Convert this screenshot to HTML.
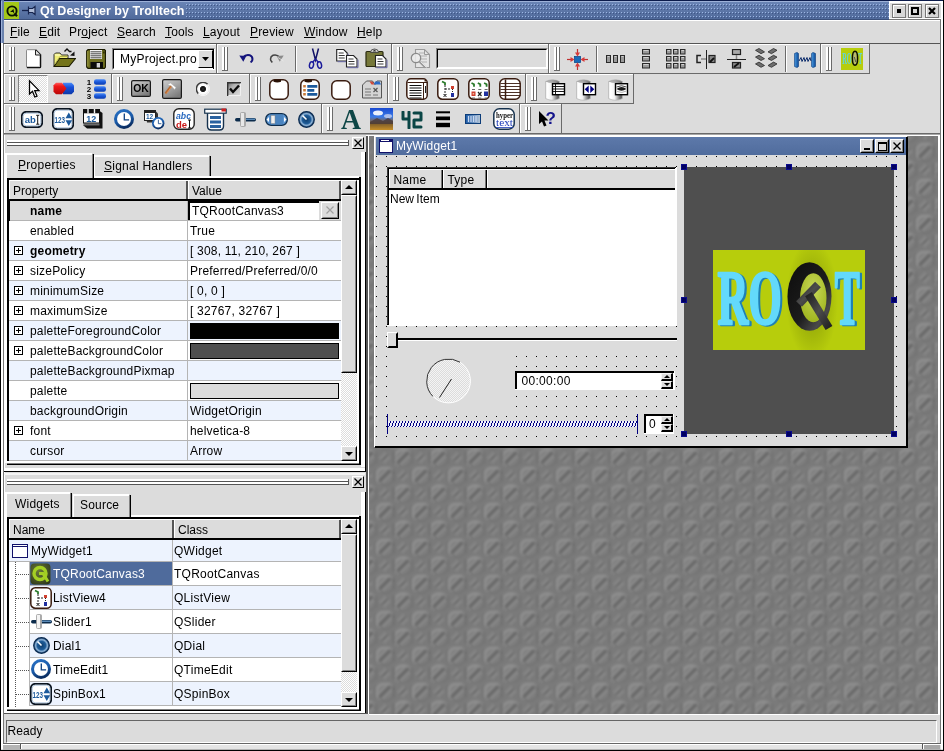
<!DOCTYPE html>
<html><head><meta charset="utf-8"><title>Qt Designer by Trolltech</title>
<style>
html,body{margin:0;padding:0}
body{width:944px;height:751px;position:relative;overflow:hidden;background:#dcdcdc;font:12px/14px "Liberation Sans",sans-serif;color:#000}
body div,body svg{position:absolute;box-sizing:border-box}
.t{white-space:nowrap;height:14px;line-height:14px}
.b{font-weight:bold}
u{text-decoration:underline;text-underline-offset:1px}
.ra{border:1px solid;border-color:#fff #848484 #848484 #fff}
.su{border:1px solid;border-color:#848484 #fff #fff #848484}
</style></head>
<body>
<div id="w" style="left:0;top:0;width:944px;height:751px;will-change:transform">
<div style="left:0px;top:0px;width:944px;height:20px;background:linear-gradient(#6c87b8,#4e6899)"></div>
<svg style="left:186px;top:4px" width="703" height="14" viewBox="0 0 703 14"><defs><pattern id="tdots" width="3" height="4" patternUnits="userSpaceOnUse"><rect x="0" y="0" width="1" height="1" fill="#9db6e4"/><rect x="1" y="1" width="1" height="1" fill="#3f5688"/></pattern></defs><rect width="703" height="14" fill="url(#tdots)"/></svg>
<div style="left:0px;top:0px;width:944px;height:1px;background:#0a1a4a"></div>
<div style="left:1px;top:1px;width:888px;height:1px;background:#9db1d8"></div>
<div style="left:0px;top:0px;width:4px;height:43px;background:#6a82ae"></div>
<div style="left:0px;top:0px;width:1px;height:43px;background:#0a1a4a"></div>
<div style="left:1px;top:1px;width:1px;height:42px;background:#9db1d8"></div>
<div style="left:4px;top:19px;width:885px;height:1px;background:#3a4f7a"></div>
<div style="left:889px;top:1px;width:55px;height:19px;background:#dcdcdc"></div>
<div style="left:889px;top:1px;width:53px;height:2px;background:#fff"></div>
<div style="left:889px;top:1px;width:1px;height:18px;background:#fff"></div>
<div style="left:892px;top:4px;width:14px;height:14px;background:#d6d6d6;border:1px solid #777;box-shadow:inset 1px 1px 0 #fff"></div>
<div style="left:897px;top:9px;width:4px;height:4px;background:#000"></div>
<div style="left:908px;top:4px;width:14px;height:14px;background:#d6d6d6;border:1px solid #777;box-shadow:inset 1px 1px 0 #fff"></div>
<div style="left:911px;top:7px;width:8px;height:8px;border:2px solid #000"></div>
<div style="left:925px;top:4px;width:14px;height:14px;background:#d6d6d6;border:1px solid #777;box-shadow:inset 1px 1px 0 #fff"></div>
<svg style="left:928px;top:7px" width="8" height="8" viewBox="0 0 8 8"><path d="M1 1L7 7M7 1L1 7" stroke="#000" stroke-width="2.200" fill="none"/></svg>
<div style="left:889px;top:18px;width:52px;height:1px;background:#fff"></div>
<div style="left:4px;top:2px;width:15px;height:17px;background:#a4c81a"></div>
<svg style="left:4px;top:2px" width="15" height="17" viewBox="0 0 15 17"><circle cx="8" cy="9" r="4.600" fill="none" stroke="#0c1404" stroke-width="1.900"/><path d="M10.500 11.500L13 14.200" stroke="#0c1404" stroke-width="2.200"/><path d="M6 10l3.500-3 1 5.500-1.500-2.500z" fill="#0c1404"/></svg>
<svg style="left:22px;top:5px" width="15" height="11" viewBox="0 0 15 11"><path d="M0 5.5h6" stroke="#16244d" stroke-width="1.3"/><path d="M6.5 1.5v8M6.5 3.5h4l2.5-2v8l-2.5-2h-4" stroke="#16244d" stroke-width="1.2" fill="#aebbd6"/></svg>
<div class="t b" style="left:40px;top:4px;color:#fff;font-size:12.5px">Qt Designer by Trolltech</div>
<div style="left:4px;top:20px;width:936px;height:23px;background:#dcdcdc"></div>
<div style="left:4px;top:20px;width:936px;height:1px;background:#fff"></div>
<div class="t" style="left:10px;top:25px;letter-spacing:0.15px"><u>F</u>ile</div>
<div class="t" style="left:39px;top:25px;letter-spacing:0.15px"><u>E</u>dit</div>
<div class="t" style="left:69px;top:25px;letter-spacing:0.15px">Pr<u>o</u>ject</div>
<div class="t" style="left:117px;top:25px;letter-spacing:0.15px"><u>S</u>earch</div>
<div class="t" style="left:165px;top:25px;letter-spacing:0.15px"><u>T</u>ools</div>
<div class="t" style="left:203px;top:25px;letter-spacing:0.15px"><u>L</u>ayout</div>
<div class="t" style="left:250px;top:25px;letter-spacing:0.15px"><u>P</u>review</div>
<div class="t" style="left:304px;top:25px;letter-spacing:0.15px"><u>W</u>indow</div>
<div class="t" style="left:357px;top:25px;letter-spacing:0.15px"><u>H</u>elp</div>
<div style="left:0px;top:43px;width:1px;height:708px;background:#000"></div>
<div style="left:1px;top:43px;width:2px;height:706px;background:#fff"></div>
<div style="left:3px;top:43px;width:1px;height:701px;background:#777"></div>
<div style="left:4px;top:135px;width:1px;height:578px;background:#fff"></div>
<div style="left:889px;top:19px;width:52px;height:1px;background:#777"></div>
<div style="left:940px;top:19px;width:1px;height:725px;background:#777"></div>
<div style="left:941px;top:1px;width:2px;height:748px;background:#fff"></div>
<div style="left:943px;top:0px;width:1px;height:751px;background:#000"></div>
<div style="left:4px;top:713px;width:364px;height:1px;background:#555"></div>
<div style="left:6px;top:720px;width:931px;height:23px;border:1px solid;border-color:#666 #fff #fff #666"></div>
<div class="t" style="left:7.5px;top:724px;letter-spacing:0.1px">Ready</div>
<div style="left:3px;top:743px;width:938px;height:1px;background:#666"></div>
<div style="left:1px;top:744px;width:942px;height:1px;background:#fff"></div>
<div style="left:3px;top:745px;width:937px;height:4px;background:#e4e4e4"></div>
<div style="left:3px;top:745px;width:17px;height:5px;background:#b4b4b4"></div>
<div style="left:20px;top:744px;width:1px;height:5px;background:#555"></div>
<div style="left:21px;top:744px;width:1px;height:5px;background:#fff"></div>
<div style="left:922px;top:744px;width:1px;height:5px;background:#555"></div>
<div style="left:923px;top:744px;width:1px;height:5px;background:#fff"></div>
<div style="left:924px;top:745px;width:16px;height:4px;background:#a8a8a8"></div>
<div style="left:3px;top:749px;width:938px;height:1px;background:#b4b4b4"></div>
<div style="left:0px;top:750px;width:944px;height:1px;background:#000"></div>
<div style="left:3px;top:43px;width:937px;height:1px;background:#555"></div>
<div style="left:4px;top:44px;width:212px;height:1px;background:#fff"></div>
<div style="left:4px;top:44px;width:1px;height:29px;background:#fff"></div>
<div style="left:4px;top:73px;width:213px;height:1px;background:#6a6a6a"></div>
<div style="left:216px;top:44px;width:1px;height:30px;background:#6a6a6a"></div>
<div style="left:9px;top:47px;width:2px;height:24px;background:#fff"></div>
<div style="left:11px;top:47px;width:1px;height:24px;background:#6a6a6a"></div>
<div style="left:9px;top:70px;width:3px;height:1px;background:#6a6a6a"></div>
<div style="left:12px;top:47px;width:2px;height:24px;background:#fff"></div>
<div style="left:14px;top:47px;width:1px;height:24px;background:#6a6a6a"></div>
<div style="left:12px;top:70px;width:3px;height:1px;background:#6a6a6a"></div>
<div style="left:217px;top:44px;width:174px;height:1px;background:#fff"></div>
<div style="left:217px;top:44px;width:1px;height:29px;background:#fff"></div>
<div style="left:217px;top:73px;width:175px;height:1px;background:#6a6a6a"></div>
<div style="left:391px;top:44px;width:1px;height:30px;background:#6a6a6a"></div>
<div style="left:222px;top:47px;width:2px;height:24px;background:#fff"></div>
<div style="left:224px;top:47px;width:1px;height:24px;background:#6a6a6a"></div>
<div style="left:222px;top:70px;width:3px;height:1px;background:#6a6a6a"></div>
<div style="left:225px;top:47px;width:2px;height:24px;background:#fff"></div>
<div style="left:227px;top:47px;width:1px;height:24px;background:#6a6a6a"></div>
<div style="left:225px;top:70px;width:3px;height:1px;background:#6a6a6a"></div>
<div style="left:392px;top:44px;width:156px;height:1px;background:#fff"></div>
<div style="left:392px;top:44px;width:1px;height:29px;background:#fff"></div>
<div style="left:392px;top:73px;width:157px;height:1px;background:#6a6a6a"></div>
<div style="left:548px;top:44px;width:1px;height:30px;background:#6a6a6a"></div>
<div style="left:397px;top:47px;width:2px;height:24px;background:#fff"></div>
<div style="left:399px;top:47px;width:1px;height:24px;background:#6a6a6a"></div>
<div style="left:397px;top:70px;width:3px;height:1px;background:#6a6a6a"></div>
<div style="left:400px;top:47px;width:2px;height:24px;background:#fff"></div>
<div style="left:402px;top:47px;width:1px;height:24px;background:#6a6a6a"></div>
<div style="left:400px;top:70px;width:3px;height:1px;background:#6a6a6a"></div>
<div style="left:549px;top:44px;width:271px;height:1px;background:#fff"></div>
<div style="left:549px;top:44px;width:1px;height:29px;background:#fff"></div>
<div style="left:549px;top:73px;width:272px;height:1px;background:#6a6a6a"></div>
<div style="left:820px;top:44px;width:1px;height:30px;background:#6a6a6a"></div>
<div style="left:554px;top:47px;width:2px;height:24px;background:#fff"></div>
<div style="left:556px;top:47px;width:1px;height:24px;background:#6a6a6a"></div>
<div style="left:554px;top:70px;width:3px;height:1px;background:#6a6a6a"></div>
<div style="left:557px;top:47px;width:2px;height:24px;background:#fff"></div>
<div style="left:559px;top:47px;width:1px;height:24px;background:#6a6a6a"></div>
<div style="left:557px;top:70px;width:3px;height:1px;background:#6a6a6a"></div>
<div style="left:821px;top:44px;width:48px;height:1px;background:#fff"></div>
<div style="left:821px;top:44px;width:1px;height:29px;background:#fff"></div>
<div style="left:821px;top:73px;width:49px;height:1px;background:#6a6a6a"></div>
<div style="left:869px;top:44px;width:1px;height:30px;background:#6a6a6a"></div>
<div style="left:826px;top:47px;width:2px;height:24px;background:#fff"></div>
<div style="left:828px;top:47px;width:1px;height:24px;background:#6a6a6a"></div>
<div style="left:826px;top:70px;width:3px;height:1px;background:#6a6a6a"></div>
<div style="left:829px;top:47px;width:2px;height:24px;background:#fff"></div>
<div style="left:831px;top:47px;width:1px;height:24px;background:#6a6a6a"></div>
<div style="left:829px;top:70px;width:3px;height:1px;background:#6a6a6a"></div>
<div style="left:4px;top:74px;width:107px;height:1px;background:#fff"></div>
<div style="left:4px;top:74px;width:1px;height:29px;background:#fff"></div>
<div style="left:4px;top:103px;width:108px;height:1px;background:#6a6a6a"></div>
<div style="left:111px;top:74px;width:1px;height:30px;background:#6a6a6a"></div>
<div style="left:9px;top:77px;width:2px;height:24px;background:#fff"></div>
<div style="left:11px;top:77px;width:1px;height:24px;background:#6a6a6a"></div>
<div style="left:9px;top:100px;width:3px;height:1px;background:#6a6a6a"></div>
<div style="left:12px;top:77px;width:2px;height:24px;background:#fff"></div>
<div style="left:14px;top:77px;width:1px;height:24px;background:#6a6a6a"></div>
<div style="left:12px;top:100px;width:3px;height:1px;background:#6a6a6a"></div>
<div style="left:112px;top:74px;width:137px;height:1px;background:#fff"></div>
<div style="left:112px;top:74px;width:1px;height:29px;background:#fff"></div>
<div style="left:112px;top:103px;width:138px;height:1px;background:#6a6a6a"></div>
<div style="left:249px;top:74px;width:1px;height:30px;background:#6a6a6a"></div>
<div style="left:117px;top:77px;width:2px;height:24px;background:#fff"></div>
<div style="left:119px;top:77px;width:1px;height:24px;background:#6a6a6a"></div>
<div style="left:117px;top:100px;width:3px;height:1px;background:#6a6a6a"></div>
<div style="left:120px;top:77px;width:2px;height:24px;background:#fff"></div>
<div style="left:122px;top:77px;width:1px;height:24px;background:#6a6a6a"></div>
<div style="left:120px;top:100px;width:3px;height:1px;background:#6a6a6a"></div>
<div style="left:250px;top:74px;width:137px;height:1px;background:#fff"></div>
<div style="left:250px;top:74px;width:1px;height:29px;background:#fff"></div>
<div style="left:250px;top:103px;width:138px;height:1px;background:#6a6a6a"></div>
<div style="left:387px;top:74px;width:1px;height:30px;background:#6a6a6a"></div>
<div style="left:255px;top:77px;width:2px;height:24px;background:#fff"></div>
<div style="left:257px;top:77px;width:1px;height:24px;background:#6a6a6a"></div>
<div style="left:255px;top:100px;width:3px;height:1px;background:#6a6a6a"></div>
<div style="left:258px;top:77px;width:2px;height:24px;background:#fff"></div>
<div style="left:260px;top:77px;width:1px;height:24px;background:#6a6a6a"></div>
<div style="left:258px;top:100px;width:3px;height:1px;background:#6a6a6a"></div>
<div style="left:388px;top:74px;width:137px;height:1px;background:#fff"></div>
<div style="left:388px;top:74px;width:1px;height:29px;background:#fff"></div>
<div style="left:388px;top:103px;width:138px;height:1px;background:#6a6a6a"></div>
<div style="left:525px;top:74px;width:1px;height:30px;background:#6a6a6a"></div>
<div style="left:393px;top:77px;width:2px;height:24px;background:#fff"></div>
<div style="left:395px;top:77px;width:1px;height:24px;background:#6a6a6a"></div>
<div style="left:393px;top:100px;width:3px;height:1px;background:#6a6a6a"></div>
<div style="left:396px;top:77px;width:2px;height:24px;background:#fff"></div>
<div style="left:398px;top:77px;width:1px;height:24px;background:#6a6a6a"></div>
<div style="left:396px;top:100px;width:3px;height:1px;background:#6a6a6a"></div>
<div style="left:526px;top:74px;width:107px;height:1px;background:#fff"></div>
<div style="left:526px;top:74px;width:1px;height:29px;background:#fff"></div>
<div style="left:526px;top:103px;width:108px;height:1px;background:#6a6a6a"></div>
<div style="left:633px;top:74px;width:1px;height:30px;background:#6a6a6a"></div>
<div style="left:531px;top:77px;width:2px;height:24px;background:#fff"></div>
<div style="left:533px;top:77px;width:1px;height:24px;background:#6a6a6a"></div>
<div style="left:531px;top:100px;width:3px;height:1px;background:#6a6a6a"></div>
<div style="left:534px;top:77px;width:2px;height:24px;background:#fff"></div>
<div style="left:536px;top:77px;width:1px;height:24px;background:#6a6a6a"></div>
<div style="left:534px;top:100px;width:3px;height:1px;background:#6a6a6a"></div>
<div style="left:4px;top:104px;width:317px;height:1px;background:#fff"></div>
<div style="left:4px;top:104px;width:1px;height:29px;background:#fff"></div>
<div style="left:4px;top:133px;width:318px;height:1px;background:#6a6a6a"></div>
<div style="left:321px;top:104px;width:1px;height:30px;background:#6a6a6a"></div>
<div style="left:9px;top:107px;width:2px;height:24px;background:#fff"></div>
<div style="left:11px;top:107px;width:1px;height:24px;background:#6a6a6a"></div>
<div style="left:9px;top:130px;width:3px;height:1px;background:#6a6a6a"></div>
<div style="left:12px;top:107px;width:2px;height:24px;background:#fff"></div>
<div style="left:14px;top:107px;width:1px;height:24px;background:#6a6a6a"></div>
<div style="left:12px;top:130px;width:3px;height:1px;background:#6a6a6a"></div>
<div style="left:322px;top:104px;width:197px;height:1px;background:#fff"></div>
<div style="left:322px;top:104px;width:1px;height:29px;background:#fff"></div>
<div style="left:322px;top:133px;width:198px;height:1px;background:#6a6a6a"></div>
<div style="left:519px;top:104px;width:1px;height:30px;background:#6a6a6a"></div>
<div style="left:327px;top:107px;width:2px;height:24px;background:#fff"></div>
<div style="left:329px;top:107px;width:1px;height:24px;background:#6a6a6a"></div>
<div style="left:327px;top:130px;width:3px;height:1px;background:#6a6a6a"></div>
<div style="left:330px;top:107px;width:2px;height:24px;background:#fff"></div>
<div style="left:332px;top:107px;width:1px;height:24px;background:#6a6a6a"></div>
<div style="left:330px;top:130px;width:3px;height:1px;background:#6a6a6a"></div>
<div style="left:520px;top:104px;width:41px;height:1px;background:#fff"></div>
<div style="left:520px;top:104px;width:1px;height:29px;background:#fff"></div>
<div style="left:520px;top:133px;width:42px;height:1px;background:#6a6a6a"></div>
<div style="left:561px;top:104px;width:1px;height:30px;background:#6a6a6a"></div>
<div style="left:525px;top:107px;width:2px;height:24px;background:#fff"></div>
<div style="left:527px;top:107px;width:1px;height:24px;background:#6a6a6a"></div>
<div style="left:525px;top:130px;width:3px;height:1px;background:#6a6a6a"></div>
<div style="left:528px;top:107px;width:2px;height:24px;background:#fff"></div>
<div style="left:530px;top:107px;width:1px;height:24px;background:#6a6a6a"></div>
<div style="left:528px;top:130px;width:3px;height:1px;background:#6a6a6a"></div>
<div style="left:4px;top:133px;width:936px;height:1px;background:#6a6a6a"></div>
<div style="left:4px;top:134px;width:936px;height:1px;background:#a8a8a8"></div>
<div style="left:295px;top:46px;width:1px;height:26px;background:#6a6a6a"></div>
<div style="left:296px;top:46px;width:1px;height:26px;background:#fff"></div>
<div style="left:596px;top:46px;width:1px;height:26px;background:#6a6a6a"></div>
<div style="left:597px;top:46px;width:1px;height:26px;background:#fff"></div>
<div style="left:785px;top:46px;width:1px;height:26px;background:#6a6a6a"></div>
<div style="left:786px;top:46px;width:1px;height:26px;background:#fff"></div>
<div style="left:112px;top:48px;width:103px;height:22px;background:#fff;border:2px solid;border-color:#000 #fff #fff #000"></div>
<div style="left:112px;top:48px;width:103px;height:22px;border:1px solid;border-color:#848484 #fff #fff #848484"></div>
<div class="t" style="left:120px;top:52px;letter-spacing:0.22px">MyProject.pro</div>
<div style="left:213px;top:49px;width:1px;height:20px;background:#000"></div>
<div style="left:198px;top:50px;width:15px;height:18px;background:#dcdcdc;border:1px solid;border-color:#fff #000 #000 #fff"></div>
<svg style="left:202px;top:57px" width="7" height="4" viewBox="0 0 7 4"><path d="M0 0h7L3.500 4z" fill="#000"/></svg>
<div style="left:436px;top:48px;width:112px;height:21px;background:#dcdcdc;border:2px solid;border-color:#000 #fff #fff #000"></div>
<div style="left:436px;top:48px;width:112px;height:21px;border:1px solid;border-color:#848484 #fff #fff #848484"></div>
<div style="left:18px;top:75px;width:30px;height:28px;background-image:repeating-conic-gradient(#fff 0 25%,#dcdcdc 0 50%);background-size:2px 2px;border:1px solid;border-color:#848484 #fff #fff #848484"></div>
<svg style="left:25px;top:49px" width="17" height="20" viewBox="0 0 17 20"><path d="M2 1h8.500l5 5v12.500h-13.500z" fill="#fff"/><path d="M1.500 18.500v-17q0-0.800 0.800-0.800h8.200" fill="none" stroke="#8a8a8a" stroke-width="1"/><path d="M10.500 0.800l5 5v12q0 0.800-0.800 0.800h-12.700" fill="none" stroke="#111" stroke-width="1.500"/><path d="M10.500 1v5h5" fill="#e4e4e4" stroke="#222" stroke-width="1"/><path d="M3 17.500h11.500v-10" stroke="#c8c8c8" stroke-width="1" fill="none"/></svg>
<svg style="left:53px;top:48px" width="23" height="20" viewBox="0 0 23 20"><path d="M11.500 3.500l2.500-2.500 2.500 2.500 2 0" stroke="#111" stroke-width="1.300" fill="none"/><path d="M21.500 3.500l0 4.500-4.500-0.500z" fill="#111"/><path d="M1 18V6.500l1.500-1.500h4.500l1.500 2h6.500v3.500" fill="#f0ee78" stroke="#333" stroke-width="1"/><path d="M1 18.500l5.500-8h16l-6.500 8z" fill="#74741a" stroke="#1a1a00" stroke-width="1.100"/><path d="M2 7h5.500" stroke="#ffffd0" stroke-width="1"/><path d="M2 16l5-7.500h7.500" stroke="#b0b048" stroke-width="1" fill="none"/></svg>
<svg style="left:86px;top:49px" width="20" height="20" viewBox="0 0 20 20"><path d="M0.700 2l1.300-1.300h16.500l1 1v16.300l-1 1.300h-16.500l-1.300-1.300z" fill="#6e6e20" stroke="#1a1a00" stroke-width="1.200"/><path d="M1.800 17.500v-15.500" stroke="#a0a048" stroke-width="1"/><rect x="4" y="1" width="12" height="9" fill="#f4f4f4"/><path d="M4.500 2.800h11M4.500 4.800h11M4.500 6.800h11M4.500 8.800h11" stroke="#333" stroke-width="0.900"/><rect x="4.500" y="13" width="12.500" height="6" fill="#0a0a0a"/><rect x="10.700" y="14" width="3.300" height="4.500" fill="#d0d0d0"/><rect x="17.300" y="2.500" width="1.200" height="2" fill="#1a1a00"/></svg>
<svg style="left:239px;top:53px" width="15" height="11" viewBox="0 0 15 11"><path d="M4 4.500q3-3.500 7-2.200q3.200 1.500 2.200 5.200l-1.500 2" fill="none" stroke="#14147c" stroke-width="2"/><path d="M0.300 2.500l7 0.500-3 5.800z" fill="#14147c"/></svg>
<svg style="left:269px;top:53px" width="15" height="11" viewBox="0 0 15 11"><path d="M11 4.500q-3-3.500-7-2.200q-3.200 1.500-2.200 5.200l1.500 2" fill="none" stroke="#444" stroke-width="1.500"/><path d="M14.700 2.500l-7 0.500 3 5.800z" fill="#8a8a8a"/><path d="M9 4.500l5.500 3.500" stroke="#eee" stroke-width="0.700"/></svg>
<svg style="left:308px;top:48px" width="15" height="22" viewBox="0 0 15 22"><path d="M4.500 0.500l3 11.500 3-11.500" fill="none" stroke="#111166" stroke-width="1.500"/><path d="M7.500 11l-3 3.500M7.500 11l3 3.500" stroke="#2020a0" stroke-width="1.500"/><ellipse cx="3.500" cy="17" rx="2" ry="3.300" fill="none" stroke="#1a1a9a" stroke-width="1.500" transform="rotate(12 3.500 17)"/><ellipse cx="11.500" cy="17" rx="2" ry="3.300" fill="none" stroke="#1a1a9a" stroke-width="1.500" transform="rotate(-12 11.500 17)"/></svg>
<svg style="left:336px;top:49px" width="23" height="22" viewBox="0 0 23 22"><path d="M0.7 0.5h7l3.500 3.500v8h-10.500z" fill="#fff" stroke="#222" stroke-width="1.100"/><path d="M2.7 4h5M2.7 6.5h6M2.7 9h6" stroke="#222" stroke-width="0.900"/><path d="M1.7 12.7h10.500v-8" stroke="#6a6aa8" stroke-width="1" fill="none"/><path d="M10.5 6.5h7l3.500 3.500v8h-10.500z" fill="#fff" stroke="#222" stroke-width="1.100"/><path d="M12.5 10h5M12.5 12.5h6M12.5 15h6" stroke="#222" stroke-width="0.900"/><path d="M11.5 18.7h10.500v-8" stroke="#6a6aa8" stroke-width="1" fill="none"/></svg>
<svg style="left:365px;top:48px" width="24" height="22" viewBox="0 0 24 22"><rect x="1" y="3.500" width="17" height="15" rx="1" fill="#76783a" stroke="#2a2a10" stroke-width="1.200"/><path d="M5.500 4.500q0-3.500 4-3.500t4 3.500z" fill="#d8d8d8" stroke="#333" stroke-width="0.800"/><path d="M7.500 3.500l2-2 2 2z" fill="#333"/><path d="M10.5 7.5h7l3.500 3.500v8h-10.500z" fill="#fff" stroke="#222" stroke-width="1.100"/><path d="M12.5 11h5M12.5 13.5h6M12.5 16h6" stroke="#222" stroke-width="0.900"/><path d="M11.5 19.7h10.500v-8" stroke="#6a6aa8" stroke-width="1" fill="none"/></svg>
<svg style="left:410px;top:48px" width="22" height="22" viewBox="0 0 22 22"><path d="M5.500 1.500h9l5 5v13h-14z" fill="#e6e6e6" stroke="#9a9a9a" stroke-width="1.100"/><path d="M14.500 1.500v5h5" fill="none" stroke="#9a9a9a" stroke-width="1"/><path d="M9 5h5M9 8h8M9 11h8M9 14h8" stroke="#b0b0b0" stroke-width="1"/><circle cx="6" cy="10" r="4.700" fill="#ececec" fill-opacity="0.85" stroke="#8a8a8a" stroke-width="1.300"/><path d="M9.500 13.500l6 6" stroke="#9a9a9a" stroke-width="2.200"/><path d="M10.500 13.500l6 6" stroke="#fff" stroke-width="0.700"/></svg>
<svg style="left:567px;top:49px" width="21" height="21" viewBox="0 0 21 21"><rect x="7.500" y="7.500" width="6" height="6" fill="#1a6ab8" stroke="#0c4c90" stroke-width="0.800"/><g transform="rotate(0 10.500 10.500)"><path d="M10.500 0v6" stroke="#c03030" stroke-width="1.200"/><path d="M8 3.500h5l-2.500 4z" fill="#d83a3a"/></g><g transform="rotate(90 10.500 10.500)"><path d="M10.500 0v6" stroke="#c03030" stroke-width="1.200"/><path d="M8 3.500h5l-2.500 4z" fill="#d83a3a"/></g><g transform="rotate(180 10.500 10.500)"><path d="M10.500 0v6" stroke="#c03030" stroke-width="1.200"/><path d="M8 3.500h5l-2.500 4z" fill="#d83a3a"/></g><g transform="rotate(270 10.500 10.500)"><path d="M10.500 0v6" stroke="#c03030" stroke-width="1.200"/><path d="M8 3.500h5l-2.500 4z" fill="#d83a3a"/></g></svg>
<svg style="left:606px;top:55px" width="20" height="9" viewBox="0 0 20 9"><rect x="0.5" y="0.5" width="4" height="7" fill="#9a9a9a" stroke="#2a2a2a" stroke-width="1"/><path d="M1.5 1.5h2" stroke="#d0d0d0" stroke-width="1"/><rect x="7.5" y="0.5" width="4" height="7" fill="#9a9a9a" stroke="#2a2a2a" stroke-width="1"/><path d="M8.5 1.5h2" stroke="#d0d0d0" stroke-width="1"/><rect x="14.5" y="0.5" width="4" height="7" fill="#9a9a9a" stroke="#2a2a2a" stroke-width="1"/><path d="M15.5 1.5h2" stroke="#d0d0d0" stroke-width="1"/></svg>
<svg style="left:642px;top:49px" width="9" height="20" viewBox="0 0 9 20"><rect x="0.5" y="0.5" width="7" height="4.5" fill="#9a9a9a" stroke="#2a2a2a" stroke-width="1"/><path d="M1.5 1.5h5" stroke="#d0d0d0" stroke-width="1"/><rect x="0.5" y="7.5" width="7" height="4.5" fill="#9a9a9a" stroke="#2a2a2a" stroke-width="1"/><path d="M1.5 8.5h5" stroke="#d0d0d0" stroke-width="1"/><rect x="0.5" y="14.5" width="7" height="4.5" fill="#9a9a9a" stroke="#2a2a2a" stroke-width="1"/><path d="M1.5 15.5h5" stroke="#d0d0d0" stroke-width="1"/></svg>
<svg style="left:666px;top:49px" width="20" height="20" viewBox="0 0 20 20"><rect x="0.5" y="0.5" width="4.5" height="4.5" fill="#9a9a9a" stroke="#2a2a2a" stroke-width="1"/><path d="M1.5 1.5h2.5" stroke="#d0d0d0" stroke-width="1"/><rect x="0.5" y="7.5" width="4.5" height="4.5" fill="#9a9a9a" stroke="#2a2a2a" stroke-width="1"/><path d="M1.5 8.5h2.5" stroke="#d0d0d0" stroke-width="1"/><rect x="0.5" y="14.5" width="4.5" height="4.5" fill="#9a9a9a" stroke="#2a2a2a" stroke-width="1"/><path d="M1.5 15.5h2.5" stroke="#d0d0d0" stroke-width="1"/><rect x="7.5" y="0.5" width="4.5" height="4.5" fill="#9a9a9a" stroke="#2a2a2a" stroke-width="1"/><path d="M8.5 1.5h2.5" stroke="#d0d0d0" stroke-width="1"/><rect x="7.5" y="7.5" width="4.5" height="4.5" fill="#9a9a9a" stroke="#2a2a2a" stroke-width="1"/><path d="M8.5 8.5h2.5" stroke="#d0d0d0" stroke-width="1"/><rect x="7.5" y="14.5" width="4.5" height="4.5" fill="#9a9a9a" stroke="#2a2a2a" stroke-width="1"/><path d="M8.5 15.5h2.5" stroke="#d0d0d0" stroke-width="1"/><rect x="14.5" y="0.5" width="4.5" height="4.5" fill="#9a9a9a" stroke="#2a2a2a" stroke-width="1"/><path d="M15.5 1.5h2.5" stroke="#d0d0d0" stroke-width="1"/><rect x="14.5" y="7.5" width="4.5" height="4.5" fill="#9a9a9a" stroke="#2a2a2a" stroke-width="1"/><path d="M15.5 8.5h2.5" stroke="#d0d0d0" stroke-width="1"/><rect x="14.5" y="14.5" width="4.5" height="4.5" fill="#9a9a9a" stroke="#2a2a2a" stroke-width="1"/><path d="M15.5 15.5h2.5" stroke="#d0d0d0" stroke-width="1"/></svg>
<svg style="left:696px;top:50px" width="20" height="20" viewBox="0 0 20 20"><path d="M10.500 0v19" stroke="#222" stroke-width="1"/><path d="M5 5.500h-4v7h4" fill="none" stroke="#222" stroke-width="1.500"/><path d="M5 9h5" stroke="#888" stroke-width="1.500"/><rect x="13" y="5.500" width="6" height="7" fill="#888" stroke="#222" stroke-width="1.200"/><path d="M14 12l4-4" stroke="#111" stroke-width="1.800"/></svg>
<svg style="left:727px;top:49px" width="19" height="20" viewBox="0 0 19 20"><path d="M0 10.500h19" stroke="#222" stroke-width="1"/><rect x="5.500" y="0.500" width="8" height="5" fill="#aaa" stroke="#222" stroke-width="1.200"/><path d="M9.500 6v4" stroke="#888" stroke-width="1.500"/><rect x="5.500" y="13.500" width="8" height="5.500" fill="#888" stroke="#222" stroke-width="1.200"/><path d="M7 18l5-4" stroke="#111" stroke-width="1.800"/></svg>
<svg style="left:755px;top:48px" width="23" height="22" viewBox="0 0 23 22"><path d="M0.500 2.3l3.500-1.800 5.500 3.400-3.500 1.800z" fill="#6e6e6e" stroke="#2a2a2a" stroke-width="0.800"/><path d="M22 2.3l-3.500-1.800-5.500 3.400 3.500 1.800z" fill="#6e6e6e" stroke="#2a2a2a" stroke-width="0.800"/><path d="M0.500 9.1l3.500-1.800 5.500 3.400-3.500 1.800z" fill="#6e6e6e" stroke="#2a2a2a" stroke-width="0.800"/><path d="M22 9.1l-3.500-1.800-5.500 3.400 3.500 1.800z" fill="#6e6e6e" stroke="#2a2a2a" stroke-width="0.800"/><path d="M0.500 15.9l3.500-1.800 5.500 3.400-3.500 1.800z" fill="#6e6e6e" stroke="#2a2a2a" stroke-width="0.800"/><path d="M22 15.9l-3.500-1.800-5.500 3.400 3.500 1.800z" fill="#6e6e6e" stroke="#2a2a2a" stroke-width="0.800"/></svg>
<svg style="left:794px;top:52px" width="22" height="16" viewBox="0 0 22 16"><defs><linearGradient id="spg" x1="0" x2="1"><stop offset="0" stop-color="#4a9ae0"/><stop offset="1" stop-color="#0c4a98"/></linearGradient></defs><path d="M0.500 1.500q3-2 4 0v13q-1 2-4 0z" fill="url(#spg)" stroke="#0c3c80" stroke-width="0.600"/><path d="M17.500 1.500q1-2 4 0v13q-3 2-4 0z" fill="url(#spg)" stroke="#0c3c80" stroke-width="0.600"/><path d="M5 9l2-3.500 1 4 2-4 1 4 2-4 1 4 2-4 1 3.500" fill="none" stroke="#0a2a6a" stroke-width="1"/></svg>
<svg style="left:841px;top:48px" width="22" height="22" viewBox="0 0 22 22"><rect width="22" height="22" fill="#b7cd0c"/><g font-family="Liberation Serif,serif" font-weight="bold" font-size="17" fill="#62d4dc"><text x="1.200" y="15.500" textLength="9.500" lengthAdjust="spacingAndGlyphs">RO</text><text x="17.300" y="15.500" textLength="4" lengthAdjust="spacingAndGlyphs">T</text></g><ellipse cx="14" cy="10.300" rx="2.600" ry="7" fill="#b8bc6a" stroke="#0c1000" stroke-width="1.500"/><path d="M13.300 9l1.500 5" stroke="#555" stroke-width="1"/></svg>
<svg style="left:28px;top:79px" width="14" height="22" viewBox="0 0 14 22"><path d="M1.500 1.800v13.200l3-2.700 2.300 5.700 2.200-0.900-2.300-5.600h4.300z" fill="#fff" stroke="#000" stroke-width="1.250" stroke-linejoin="miter"/></svg>
<svg style="left:53px;top:82px" width="22" height="13" viewBox="0 0 22 13"><defs><linearGradient id="cr" x1="0" y1="0" x2="0" y2="1"><stop offset="0" stop-color="#ff5a5a"/><stop offset="0.300" stop-color="#f01818"/><stop offset="1" stop-color="#b80808"/></linearGradient><linearGradient id="cb" x1="0" y1="0" x2="0" y2="1"><stop offset="0" stop-color="#4a8af8"/><stop offset="0.400" stop-color="#1850d8"/><stop offset="1" stop-color="#0c38a8"/></linearGradient></defs><path d="M10 0.800h8.500l2.500 2.500v6.500l-2.500 2.500h-8.500z" fill="url(#cb)"/><path d="M3 0.800h6l4.500 5.700-4.500 5.800h-6l-2.500-2.500v-6.500z" fill="url(#cr)"/></svg>
<svg style="left:86px;top:79px" width="21" height="21" viewBox="0 0 21 21"><g font-family="Liberation Sans,sans-serif" font-size="8" font-weight="bold" fill="#000"><text x="0.800" y="6.300">1</text><text x="0.800" y="13.300">2</text><text x="0.800" y="20.300">3</text></g><defs><linearGradient id="tb" x1="0" y1="0" x2="0" y2="1"><stop offset="0" stop-color="#4a8af8"/><stop offset="0.500" stop-color="#1a58d8"/><stop offset="1" stop-color="#0c3cb0"/></linearGradient></defs><rect x="8" y="0.200" width="12" height="5.500" rx="2.200" fill="url(#tb)"/><rect x="8" y="7.200" width="12" height="5.500" rx="2.200" fill="url(#tb)"/><rect x="8" y="14.200" width="12" height="5.500" rx="2.200" fill="url(#tb)"/></svg>
<svg style="left:131px;top:80px" width="20" height="17" viewBox="0 0 20 17"><defs><linearGradient id="bg1" x1="0" y1="0" x2="0.600" y2="1"><stop offset="0" stop-color="#d0d0d0"/><stop offset="0.500" stop-color="#a8a8a8"/><stop offset="1" stop-color="#7c7c7c"/></linearGradient></defs><rect x="0.600" y="0.600" width="18.800" height="15.800" rx="1.500" fill="url(#bg1)" stroke="#1a1a1a" stroke-width="1.200"/><text x="2.200" y="12.300" font-family="Liberation Sans,sans-serif" font-size="10.500" font-weight="bold" fill="#000" textLength="15.500" lengthAdjust="spacingAndGlyphs">OK</text></svg>
<svg style="left:162px;top:79px" width="20" height="20" viewBox="0 0 20 20"><rect x="0.600" y="0.600" width="18.800" height="18.800" rx="1.500" fill="url(#bg1)" stroke="#1a1a1a" stroke-width="1.200"/><path d="M3.500 14.500l6.500-8.500" stroke="#b86a30" stroke-width="2.200"/><path d="M4.500 14.500l6-8" stroke="#e8a878" stroke-width="0.700"/><path d="M5.500 5.500l3-1.500 5.500 4.500-1.500 2-3-3.500z" fill="#fff" stroke="#aaa" stroke-width="0.500"/></svg>
<svg style="left:196px;top:82px" width="14" height="14" viewBox="0 0 14 14"><defs><radialGradient id="rg" cx="0.5" cy="0.5" r="0.5"><stop offset="0" stop-color="#3a3a3a"/><stop offset="0.200" stop-color="#111"/><stop offset="0.400" stop-color="#222"/><stop offset="0.520" stop-color="#fff"/><stop offset="0.800" stop-color="#f8f8f8"/><stop offset="1" stop-color="#d0d0d0"/></radialGradient></defs><circle cx="7" cy="7" r="6.700" fill="url(#rg)"/><path d="M2.300 11.700A6.600 6.600 0 0 1 11.700 2.300" fill="none" stroke="#3a3a3a" stroke-width="1.400"/><path d="M11.700 2.300A6.600 6.600 0 0 1 2.300 11.700" fill="none" stroke="#f4f4f4" stroke-width="1"/></svg>
<svg style="left:227px;top:82px" width="15" height="15" viewBox="0 0 15 15"><defs><linearGradient id="cbg" x1="0" y1="0" x2="1" y2="1"><stop offset="0" stop-color="#5a5a5a"/><stop offset="0.350" stop-color="#b0b0b0"/><stop offset="1" stop-color="#e0e0e0"/></linearGradient></defs><rect x="0" y="0" width="14" height="14" fill="url(#cbg)"/><path d="M0.700 14v-13.300h13.300" stroke="#333" stroke-width="1.400" fill="none"/><path d="M13.500 1.500v12h-12" stroke="#f0f0f0" stroke-width="1" fill="none"/><path d="M3 6.500l3 3.500 6-6.500" stroke="#0a0a0a" stroke-width="2.400" fill="none"/></svg>
<svg style="left:269px;top:79px" width="20" height="21" viewBox="0 0 20 21"><rect x="0.8" y="0.8" width="18.4" height="19.4" rx="5" fill="#fff" stroke="#3a1c10" stroke-width="1.5"/><path d="M4.500 0.500h7.500v2.300q-3.700 1.200-7.500 0z" fill="#2a1206"/></svg>
<svg style="left:300px;top:79px" width="20" height="21" viewBox="0 0 20 21"><rect x="0.8" y="0.8" width="18.4" height="19.4" rx="5" fill="#fff" stroke="#3a1c10" stroke-width="1.5"/><path d="M4.500 0.500h7.500v2.300q-3.700 1.200-7.500 0z" fill="#2a1206"/><path d="M3.200 6h2.600v2.600h-2.600zM3.200 10h2.600v2.600h-2.600zM3.200 14h2.600v2.600h-2.600z" fill="#c87a3a"/><path d="M7.300 6h10v2.800h-10zM7.300 10h7v2.800h-7zM7.300 14h10v2.800h-10z" fill="#1c5a9c"/></svg>
<svg style="left:331px;top:80px" width="20" height="20" viewBox="0 0 20 20"><rect x="0.8" y="0.8" width="18.4" height="18.4" rx="5" fill="#fff" stroke="#3a1c10" stroke-width="1.5"/></svg>
<svg style="left:362px;top:80px" width="21" height="19" viewBox="0 0 21 19"><path d="M0.500 18V5l4-4h6l2.500 3.500 2-3.500h4.500v17z" fill="#d4d4d4" stroke="#555" stroke-width="1"/><path d="M7.500 1.500h3l2 3h-3z" fill="#d04a3a"/><path d="M13 1.500h4.500l1.500 3h-7z" fill="#2a6ac8"/><path d="M3 9h6M3 12h6M3 15h6M11 15h5" stroke="#777" stroke-width="1"/><path d="M11.500 8l4 4m0-4l-4 4" stroke="#555" stroke-width="1.200"/></svg>
<svg style="left:406px;top:78px" width="22" height="22" viewBox="0 0 22 22"><rect x="0.8" y="0.8" width="20.4" height="20.4" rx="4" fill="#fff" stroke="#3a1c10" stroke-width="1.5"/><path d="M1.500 4.500h20" stroke="#3a1c10" stroke-width="1"/><path d="M17.500 4.500v17" stroke="#3a1c10" stroke-width="1"/><rect x="18.500" y="2" width="1.500" height="1.500" fill="#3a1c10"/><path d="M19.500 8v7" stroke="#222" stroke-width="1"/><path d="M3.500 7.500h12M3.500 10h12M3.500 12.500h12M3.500 15h12M3.500 17.500h12M3.500 20h12" stroke="#111" stroke-width="1.100"/></svg>
<svg style="left:437px;top:78px" width="22" height="22" viewBox="0 0 22 22"><rect x="0.8" y="0.8" width="20.4" height="20.4" rx="4.5" fill="#fff" stroke="#3a1c10" stroke-width="1.5"/><path d="M5 3.500l3 1.500v2" stroke="#2a7a2a" stroke-width="1.800" fill="none"/><path d="M8 7v10M8 11h5" stroke="#222" stroke-width="1" stroke-dasharray="2 1" fill="none"/><rect x="14" y="8" width="3" height="3" fill="#d04030"/><path d="M15.500 11v4" stroke="#222" stroke-width="1" stroke-dasharray="1 1"/><rect x="14" y="15" width="3" height="4" fill="#2030a0"/><path d="M6.500 16l3 3m0-3l-3 3" stroke="#222" stroke-width="1"/></svg>
<svg style="left:468px;top:78px" width="22" height="22" viewBox="0 0 22 22"><rect x="0.8" y="0.8" width="20.4" height="20.4" rx="4.5" fill="#fff" stroke="#3a1c10" stroke-width="1.5"/><path d="M3.5 5l2.500 1.200v2.500" stroke="#2a7a2a" stroke-width="1.800" fill="none"/><path d="M4 11.500h3" stroke="#444" stroke-width="0.800"/><path d="M4 20h3" stroke="#444" stroke-width="0.800"/><path d="M9.8 5l2.500 1.200v2.500" stroke="#2a7a2a" stroke-width="1.800" fill="none"/><path d="M10.3 11.500h3" stroke="#444" stroke-width="0.800"/><path d="M10.3 20h3" stroke="#444" stroke-width="0.800"/><path d="M16.1 5l2.500 1.200v2.500" stroke="#2a7a2a" stroke-width="1.800" fill="none"/><path d="M16.6 11.500h3" stroke="#444" stroke-width="0.800"/><path d="M16.6 20h3" stroke="#444" stroke-width="0.800"/><rect x="3.500" y="13.500" width="4" height="4.500" fill="#d04030"/><rect x="4.700" y="15" width="1.500" height="1.500" fill="#f0c0a0"/><path d="M10 14l3.500 4m0-4l-3.500 4" stroke="#222" stroke-width="1.200"/><rect x="16" y="13.500" width="4" height="4.500" fill="#2030a0"/></svg>
<svg style="left:499px;top:78px" width="22" height="22" viewBox="0 0 22 22"><rect x="0.8" y="0.8" width="20.4" height="20.4" rx="5" fill="#fff" stroke="#3a1c10" stroke-width="1.5"/><path d="M6.500 1.500v20" stroke="#3a1c10" stroke-width="1.500"/><path d="M1.500 5.500h20M1.500 8.500h20M1.500 11.500h20M1.500 14.500h20M1.500 17.500h20" stroke="#3a1c10" stroke-width="0.900"/></svg>
<svg style="left:545px;top:78.5px" width="21" height="22" viewBox="0 0 21 22"><defs><linearGradient id="cy" x1="0" x2="1"><stop offset="0" stop-color="#e8e8e8"/><stop offset="0.150" stop-color="#fff"/><stop offset="0.450" stop-color="#f0f0f0"/><stop offset="0.750" stop-color="#8a8a8a"/><stop offset="0.900" stop-color="#5a5a5a"/><stop offset="1" stop-color="#888"/></linearGradient></defs><path d="M0.500 2.500q7-3.500 14 0v17q-7 3.500-14 0z" fill="url(#cy)" stroke="#b4b4b4" stroke-width="0.700"/><path d="M0.500 2.500q7-3.500 14 0q-7 3-14 0z" fill="#8a8a8a" fill-opacity="0.700"/><rect x="7.500" y="4.700" width="12" height="11" fill="#fff" stroke="#000" stroke-width="1.400"/><path d="M7.500 7.500h12M7.500 10h12M7.500 12.500h12M10.500 4.700v11" stroke="#000" stroke-width="0.900"/></svg>
<svg style="left:576px;top:78.5px" width="21" height="22" viewBox="0 0 21 22"><defs><linearGradient id="cy2" x1="0" x2="1"><stop offset="0" stop-color="#e8e8e8"/><stop offset="0.150" stop-color="#fff"/><stop offset="0.450" stop-color="#f0f0f0"/><stop offset="0.750" stop-color="#8a8a8a"/><stop offset="0.900" stop-color="#5a5a5a"/><stop offset="1" stop-color="#888"/></linearGradient></defs><path d="M0.500 2.500q7-3.500 14 0v17q-7 3.500-14 0z" fill="url(#cy2)" stroke="#b4b4b4" stroke-width="0.700"/><path d="M0.500 2.500q7-3.500 14 0q-7 3-14 0z" fill="#8a8a8a" fill-opacity="0.700"/><rect x="7.500" y="4.700" width="12" height="11" fill="#fff" stroke="#000" stroke-width="1.400"/><path d="M12.700 6.500v7.500l-4-3.700zM14.300 6.500v7.500l4-3.700z" fill="#000080"/></svg>
<svg style="left:608px;top:78.5px" width="21" height="22" viewBox="0 0 21 22"><defs><linearGradient id="cy3" x1="0" x2="1"><stop offset="0" stop-color="#e8e8e8"/><stop offset="0.150" stop-color="#fff"/><stop offset="0.450" stop-color="#f0f0f0"/><stop offset="0.750" stop-color="#8a8a8a"/><stop offset="0.900" stop-color="#5a5a5a"/><stop offset="1" stop-color="#888"/></linearGradient></defs><path d="M0.500 2.500q7-3.500 14 0v17q-7 3.500-14 0z" fill="url(#cy3)" stroke="#b4b4b4" stroke-width="0.700"/><path d="M0.500 2.500q7-3.500 14 0q-7 3-14 0z" fill="#8a8a8a" fill-opacity="0.700"/><rect x="7.500" y="4.700" width="12" height="11" fill="#fff" stroke="#000" stroke-width="1.400"/><path d="M8.500 10q5-4 10 0q-5 3.500-10 0z" fill="#1a1a1a"/><path d="M8.500 8q5-2.500 10 0" stroke="#333" stroke-width="0.900" fill="none"/><path d="M9 12.500q5 2 9.500-0.500" stroke="#999" stroke-width="0.800" fill="none"/></svg>
<svg style="left:21px;top:111px" width="22" height="17" viewBox="0 0 22 17"><rect x="0.8" y="0.8" width="20.4" height="15.4" rx="4.5" fill="#fff" stroke="#0a1420" stroke-width="1.8"/><rect x="2.200" y="2.200" width="17.600" height="12.600" rx="3" fill="none" stroke="#a8c0d8" stroke-width="0.900"/><text x="3.800" y="12.300" font-family="Liberation Sans,sans-serif" font-size="9.500" font-weight="bold" fill="#1c5a9c">ab</text><path d="M16.700 4.500v8.500M15.200 4.300h3M15.200 13.200h3" stroke="#111" stroke-width="1"/></svg>
<svg style="left:52px;top:108px" width="22" height="22" viewBox="0 0 22 22"><rect x="0.8" y="0.8" width="20.4" height="20.4" rx="4.5" fill="#fff" stroke="#0a1420" stroke-width="1.8"/><rect x="2.200" y="2.200" width="17.6" height="17.6" rx="3" fill="none" stroke="#a8c0d8" stroke-width="0.900"/><text x="2.600" y="14.800" font-family="Liberation Sans,sans-serif" font-size="9.500" font-weight="bold" fill="#1c5a9c" textLength="10.500" lengthAdjust="spacingAndGlyphs">123</text><path d="M13.500 10.200l3.300-5.700 3.300 5.700zM13.500 12.300l3.300 5.700 3.300-5.700z" fill="#1c5a9c"/></svg>
<svg style="left:83px;top:109px" width="21" height="21" viewBox="0 0 21 21"><defs><linearGradient id="cg" x1="0" y1="0" x2="0" y2="1"><stop offset="0" stop-color="#c8c8c8"/><stop offset="1" stop-color="#3a3a3a"/></linearGradient></defs><path d="M16 1.500l3.500 2.500v15.500h-15.500l-3.500-3z" fill="#111"/><rect x="0.500" y="13" width="16" height="3.800" fill="url(#cg)"/><rect x="0.500" y="0.500" width="16" height="13.500" fill="#fff" stroke="#111" stroke-width="1"/><rect x="0.500" y="0.500" width="16" height="3.800" fill="#111"/><path d="M5 0v4.500M11.500 0v4.500" stroke="#f4f4f4" stroke-width="1.400"/><text x="3.200" y="12.800" font-family="Liberation Sans,sans-serif" font-size="9" font-weight="bold" fill="#1c5a9c" textLength="10" lengthAdjust="spacingAndGlyphs">12</text></svg>
<svg style="left:114px;top:109px" width="20" height="20" viewBox="0 0 20 20"><defs><radialGradient id="ckg" cx="0.45" cy="0.4" r="0.7"><stop offset="0" stop-color="#fff"/><stop offset="0.750" stop-color="#fff"/><stop offset="1" stop-color="#c8d8e8"/></radialGradient><linearGradient id="ckr" x1="0" y1="0" x2="0.400" y2="1"><stop offset="0" stop-color="#2a74c8"/><stop offset="0.600" stop-color="#1a5aa8"/><stop offset="1" stop-color="#0a2c60"/></linearGradient></defs><circle cx="10" cy="10" r="10" fill="url(#ckr)"/><circle cx="10" cy="10" r="7" fill="url(#ckg)"/><path d="M10.3 4.5v6.3h4.8" stroke="#0c3f80" stroke-width="1.300" fill="none"/></svg>
<svg style="left:144px;top:109px" width="22" height="22" viewBox="0 0 22 22"><path d="M1 2.500h11l2 2v9h-11z" fill="#333"/><rect x="0.500" y="1.500" width="11" height="10" fill="#fff" stroke="#222" stroke-width="1"/><rect x="0.500" y="1.500" width="11" height="2.500" fill="#222"/><text x="2" y="10" font-family="Liberation Sans,sans-serif" font-size="6.500" font-weight="bold" fill="#1c5a9c">12</text><g transform="translate(8 8) scale(0.620)"><defs><radialGradient id="ckg2" cx="0.45" cy="0.4" r="0.7"><stop offset="0" stop-color="#fff"/><stop offset="0.750" stop-color="#fff"/><stop offset="1" stop-color="#c8d8e8"/></radialGradient><linearGradient id="ckr" x1="0" y1="0" x2="0.400" y2="1"><stop offset="0" stop-color="#2a74c8"/><stop offset="0.600" stop-color="#1a5aa8"/><stop offset="1" stop-color="#0a2c60"/></linearGradient></defs><circle cx="10" cy="10" r="10" fill="url(#ckr)"/><circle cx="10" cy="10" r="7" fill="url(#ckg2)"/><path d="M10.3 4.5v6.3h4.8" stroke="#0c3f80" stroke-width="1.300" fill="none"/></g></svg>
<svg style="left:173px;top:108px" width="22" height="22" viewBox="0 0 22 22"><rect x="0.8" y="0.8" width="20.4" height="20.4" rx="5" fill="#fff" stroke="#222" stroke-width="1.4"/><text x="3" y="10.500" font-family="Liberation Sans,sans-serif" font-size="9" font-style="italic" font-weight="bold" fill="#2a6ac0" textLength="15" lengthAdjust="spacingAndGlyphs">abc</text><text x="3" y="19.500" font-family="Liberation Sans,sans-serif" font-size="9.500" font-weight="bold" fill="#c81818">de</text><path d="M16.500 12v8M15 12h3M15 20h3" stroke="#111" stroke-width="1"/></svg>
<svg style="left:204px;top:108px" width="23" height="23" viewBox="0 0 23 23"><path d="M3.500 5v13q0 4 4 4h8q4 0 4-4v-13" fill="#fff" stroke="#16324e" stroke-width="1.400"/><rect x="0.700" y="1.200" width="21.500" height="4" fill="#fff" stroke="#16324e" stroke-width="1.200"/><rect x="17.500" y="0.500" width="4.500" height="3" fill="#d02020"/><path d="M6 8h11v3h-11zM6 12.500h11v3h-11zM6 17h11v3h-11z" fill="#2a62a0"/></svg>
<svg style="left:235px;top:112px" width="21" height="15" viewBox="0 0 21 15"><rect x="0" y="6" width="21" height="3.500" rx="1.700" fill="#0c2c4c"/><rect x="11" y="6.500" width="9" height="1.500" fill="#5a8ab8"/><rect x="5.500" y="0.500" width="5" height="14" rx="1" fill="#e8e8e8" stroke="#9a9a9a" stroke-width="0.800"/><rect x="9" y="1" width="1.500" height="13" fill="#aaa"/></svg>
<svg style="left:265px;top:113px" width="23" height="13" viewBox="0 0 23 13"><rect x="0.700" y="0.700" width="21.600" height="11.600" rx="5.500" fill="#5a94d0" stroke="#0c2c4c" stroke-width="1.300"/><rect x="5" y="2" width="13" height="9" fill="#4a84c0"/><rect x="6" y="2.500" width="4" height="8" fill="#f0f0f0" stroke="#888" stroke-width="0.500"/><path d="M4 4v5l-2.500-2.500zM19 4v5l2.500-2.500z" fill="#fff"/></svg>
<svg style="left:298px;top:111px" width="17" height="17" viewBox="0 0 17 17"><defs><radialGradient id="dlg" cx="0.5" cy="0.5" r="0.5"><stop offset="0" stop-color="#0e3c6c"/><stop offset="0.55" stop-color="#1e5c98"/><stop offset="0.75" stop-color="#8fb4d8"/><stop offset="1" stop-color="#0e3c6c"/></radialGradient></defs><circle cx="8.5" cy="8.5" r="7.8" fill="url(#dlg)" stroke="#0a2a50" stroke-width="1.200"/><path d="M8.5 8.5L4.5 4.5" stroke="#fff" stroke-width="1.600"/></svg>
<svg style="left:340px;top:108px" width="23" height="23" viewBox="0 0 23 23"><text x="1" y="21" font-family="Liberation Serif,serif" font-size="28.500" font-weight="bold" fill="#0e4646" textLength="20" lengthAdjust="spacingAndGlyphs">A</text></svg>
<svg style="left:370px;top:108px" width="23" height="22" viewBox="0 0 23 22"><defs><linearGradient id="sky" x1="0" y1="0" x2="0" y2="1"><stop offset="0" stop-color="#1a4ad0"/><stop offset="0.400" stop-color="#3a7ae8"/><stop offset="0.550" stop-color="#6a6a7a"/><stop offset="0.700" stop-color="#7a5a2a"/><stop offset="1" stop-color="#c89028"/></linearGradient></defs><rect width="23" height="22" fill="url(#sky)"/><ellipse cx="8" cy="5" rx="5" ry="2.500" fill="#fff" fill-opacity="0.900"/><ellipse cx="18" cy="8" rx="4" ry="2" fill="#dde" fill-opacity="0.700"/><path d="M0 14l7-4 6 3 5-3 5 3v3h-23z" fill="#4a3a3a" fill-opacity="0.800"/></svg>
<svg style="left:401px;top:111px" width="22" height="18" viewBox="0 0 22 18"><path d="M2 1v7h6M8 1v16" fill="none" stroke="#0a4646" stroke-width="3" stroke-linejoin="round" stroke-linecap="round"/><path d="M13 2h7v7h-7v7h7" fill="none" stroke="#0a4646" stroke-width="3" stroke-linejoin="round" stroke-linecap="round"/></svg>
<svg style="left:436px;top:111px" width="15" height="17" viewBox="0 0 15 17"><rect x="0" y="0.300" width="14" height="2" fill="#000"/><rect x="0" y="5.500" width="14" height="3.700" fill="#000"/><rect x="0" y="11.800" width="14" height="4.400" fill="#000"/></svg>
<svg style="left:465px;top:114px" width="16" height="10" viewBox="0 0 16 10"><defs><linearGradient id="pg" x1="0" x2="1"><stop offset="0" stop-color="#1a5aa8"/><stop offset="1" stop-color="#b8c8d8"/></linearGradient></defs><rect x="0.500" y="0.500" width="15" height="9" fill="url(#pg)" stroke="#0c3c78" stroke-width="1"/><path d="M3.500 2v6M6 2v6M8.500 2v6M11 2v6" stroke="#c8d8f0" stroke-width="1.200"/></svg>
<svg style="left:493px;top:108px" width="22" height="22" viewBox="0 0 22 22"><rect x="0.8" y="0.8" width="20.4" height="20.4" rx="5.5" fill="#fff" stroke="#16324e" stroke-width="1.5"/><text x="3" y="9.500" font-family="Liberation Serif,serif" font-size="8.500" font-weight="bold" fill="#111" textLength="17" lengthAdjust="spacingAndGlyphs">hyper</text><text x="3" y="18" font-family="Liberation Serif,serif" font-size="11" fill="#1a3ab8" textLength="17" lengthAdjust="spacingAndGlyphs">text</text><path d="M3 19.500h17" stroke="#1a3ab8" stroke-width="0.800"/></svg>
<svg style="left:538px;top:110px" width="19" height="19" viewBox="0 0 19 19"><path d="M1 1v13l3-2.500 2 5 2.500-1-2-5h4z" fill="#000"/><text x="7.500" y="14" font-family="Liberation Sans,sans-serif" font-size="17" font-weight="bold" fill="#14148c">?</text></svg>
<div style="left:366px;top:135px;width:2px;height:579px;background:#555"></div>
<div style="left:368px;top:135px;width:1px;height:579px;background:#fff"></div>
<div style="left:5px;top:153px;width:2px;height:310px;background:#fff"></div>
<div style="left:5px;top:492px;width:2px;height:219px;background:#fff"></div>
<div style="left:361px;top:152px;width:4px;height:315px;background:#fff"></div>
<div style="left:365px;top:152px;width:1px;height:320px;background:#000"></div>
<div style="left:361px;top:492px;width:4px;height:221px;background:#fff"></div>
<div style="left:365px;top:492px;width:1px;height:221px;background:#000"></div>
<div style="left:7px;top:463px;width:354px;height:1px;background:#808080"></div>
<div style="left:7px;top:464px;width:354px;height:1px;background:#000"></div>
<div style="left:5px;top:468px;width:360px;height:3px;background:#fff"></div>
<div style="left:4px;top:471px;width:362px;height:1px;background:#000"></div>
<div style="left:4px;top:473px;width:361px;height:2px;background:#f4f4f4"></div>
<div style="left:7px;top:709px;width:354px;height:1px;background:#808080"></div>
<div style="left:7px;top:710px;width:354px;height:1px;background:#000"></div>
<div style="left:5px;top:711px;width:360px;height:2px;background:#fff"></div>
<div style="left:7px;top:140px;width:342px;height:2px;background:#fff"></div>
<div style="left:7px;top:142px;width:342px;height:1px;background:#555"></div>
<div style="left:348px;top:140px;width:1px;height:3px;background:#555"></div>
<div style="left:7px;top:143px;width:342px;height:2px;background:#fff"></div>
<div style="left:7px;top:145px;width:342px;height:1px;background:#555"></div>
<div style="left:348px;top:143px;width:1px;height:3px;background:#555"></div>
<div style="left:352px;top:137px;width:12px;height:12px;background:#dcdcdc;border:1px solid;border-color:#fff #000 #000 #fff"></div>
<svg style="left:354px;top:139px" width="8" height="8" viewBox="0 0 8 8"><path d="M0.5 0.5L7.5 7.5M7.5 0.5L0.5 7.5" stroke="#000" stroke-width="1.3" fill="none"/></svg>
<div style="left:7px;top:153px;width:87px;height:25px;background:#dcdcdc"></div>
<div style="left:7px;top:153px;width:85px;height:2px;background:#fff"></div>
<div style="left:92px;top:154px;width:1px;height:24px;background:#848484"></div>
<div style="left:93px;top:154px;width:1px;height:24px;background:#000"></div>
<div class="t" style="left:18px;top:158px;letter-spacing:0.3px"><u>P</u>roperties</div>
<div style="left:94px;top:155px;width:117px;height:22px;background:#dcdcdc"></div>
<div style="left:94px;top:155px;width:115px;height:2px;background:#fff"></div>
<div style="left:94px;top:156px;width:1px;height:21px;background:#fff"></div>
<div style="left:209px;top:156px;width:1px;height:21px;background:#848484"></div>
<div style="left:210px;top:156px;width:1px;height:21px;background:#000"></div>
<div class="t" style="left:104px;top:159px;letter-spacing:0.25px"><u>S</u>ignal Handlers</div>
<div style="left:94px;top:176px;width:265px;height:2px;background:#fff"></div>
<div style="left:359px;top:177px;width:2px;height:287px;background:#000"></div>
<div style="left:7px;top:178px;width:352px;height:2px;background:#000"></div>
<div style="left:7px;top:178px;width:2px;height:283px;background:#000"></div>
<div style="left:357px;top:180px;width:2px;height:283px;background:#fff"></div>
<div style="left:7px;top:461px;width:352px;height:2px;background:#fff"></div>
<div style="left:9px;top:180px;width:332px;height:281px;background:#fff"></div>
<div style="left:9px;top:180px;width:332px;height:19px;background:#dcdcdc"></div>
<div style="left:9px;top:180px;width:331px;height:1px;background:#fff"></div>
<div style="left:9px;top:180px;width:1px;height:19px;background:#fff"></div>
<div style="left:188px;top:181px;width:1px;height:18px;background:#fff"></div>
<div style="left:186px;top:181px;width:2px;height:18px;background:#555"></div>
<div style="left:339px;top:181px;width:2px;height:18px;background:#555"></div>
<div style="left:9px;top:199px;width:332px;height:2px;background:#000"></div>
<div class="t" style="left:13px;top:184px;">Property</div>
<div class="t" style="left:192px;top:184px;">Value</div>
<div style="left:9px;top:201px;width:332px;height:20px;background:#dcdcdc"></div>
<div style="left:9px;top:220px;width:332px;height:1px;background:#b4b4b4"></div>
<div style="left:187px;top:201px;width:1px;height:20px;background:#b4b4b4"></div>
<div class="t b" style="left:30px;top:204px;letter-spacing:0.2px">name</div>
<div style="left:188px;top:201px;width:131px;height:19px;background:#fff;border-top:2px solid #000;border-left:2px solid #000"></div>
<div style="left:9px;top:201px;width:1px;height:20px;background:#000"></div>
<div class="t" style="left:192px;top:204px;letter-spacing:0.2px">TQRootCanvas3</div>
<div style="left:321px;top:202px;width:18px;height:17px;background:#dcdcdc;border:1px solid;border-color:#fff #000 #000 #fff"></div>
<div style="left:322px;top:203px;width:16px;height:15px;border:1px solid;border-color:#dcdcdc #848484 #848484 #dcdcdc"></div>
<svg style="left:326px;top:206px" width="8" height="8" viewBox="0 0 8 8"><path d="M0.5 0.5L7.5 7.5M7.5 0.5L0.5 7.5" stroke="#a0a0a0" stroke-width="1.2" fill="none"/></svg>
<div style="left:9px;top:221px;width:332px;height:20px;background:#fff"></div>
<div style="left:9px;top:240px;width:332px;height:1px;background:#b4b4b4"></div>
<div style="left:187px;top:221px;width:1px;height:20px;background:#b4b4b4"></div>
<div class="t" style="left:30px;top:224px;letter-spacing:0.2px">enabled</div>
<div class="t" style="left:190px;top:224px;letter-spacing:0.2px">True</div>
<div style="left:9px;top:241px;width:332px;height:20px;background:#edf3fe"></div>
<div style="left:9px;top:260px;width:332px;height:1px;background:#b4b4b4"></div>
<div style="left:187px;top:241px;width:1px;height:20px;background:#b4b4b4"></div>
<div class="t b" style="left:30px;top:244px;letter-spacing:0.2px">geometry</div>
<div style="left:14px;top:246px;width:9px;height:9px;background:#fff;border:1px solid #000"></div>
<div style="left:16px;top:250px;width:5px;height:1px;background:#000"></div>
<div style="left:18px;top:248px;width:1px;height:5px;background:#000"></div>
<div class="t" style="left:190px;top:244px;letter-spacing:0.2px">[ 308, 11, 210, 267 ]</div>
<div style="left:9px;top:261px;width:332px;height:20px;background:#fff"></div>
<div style="left:9px;top:280px;width:332px;height:1px;background:#b4b4b4"></div>
<div style="left:187px;top:261px;width:1px;height:20px;background:#b4b4b4"></div>
<div class="t" style="left:30px;top:264px;letter-spacing:0.2px">sizePolicy</div>
<div style="left:14px;top:266px;width:9px;height:9px;background:#fff;border:1px solid #000"></div>
<div style="left:16px;top:270px;width:5px;height:1px;background:#000"></div>
<div style="left:18px;top:268px;width:1px;height:5px;background:#000"></div>
<div class="t" style="left:190px;top:264px;letter-spacing:0.2px">Preferred/Preferred/0/0</div>
<div style="left:9px;top:281px;width:332px;height:20px;background:#edf3fe"></div>
<div style="left:9px;top:300px;width:332px;height:1px;background:#b4b4b4"></div>
<div style="left:187px;top:281px;width:1px;height:20px;background:#b4b4b4"></div>
<div class="t" style="left:30px;top:284px;letter-spacing:0.2px">minimumSize</div>
<div style="left:14px;top:286px;width:9px;height:9px;background:#fff;border:1px solid #000"></div>
<div style="left:16px;top:290px;width:5px;height:1px;background:#000"></div>
<div style="left:18px;top:288px;width:1px;height:5px;background:#000"></div>
<div class="t" style="left:190px;top:284px;letter-spacing:0.2px">[ 0, 0 ]</div>
<div style="left:9px;top:301px;width:332px;height:20px;background:#fff"></div>
<div style="left:9px;top:320px;width:332px;height:1px;background:#b4b4b4"></div>
<div style="left:187px;top:301px;width:1px;height:20px;background:#b4b4b4"></div>
<div class="t" style="left:30px;top:304px;letter-spacing:0.2px">maximumSize</div>
<div style="left:14px;top:306px;width:9px;height:9px;background:#fff;border:1px solid #000"></div>
<div style="left:16px;top:310px;width:5px;height:1px;background:#000"></div>
<div style="left:18px;top:308px;width:1px;height:5px;background:#000"></div>
<div class="t" style="left:190px;top:304px;letter-spacing:0.2px">[ 32767, 32767 ]</div>
<div style="left:9px;top:321px;width:332px;height:20px;background:#edf3fe"></div>
<div style="left:9px;top:340px;width:332px;height:1px;background:#b4b4b4"></div>
<div style="left:187px;top:321px;width:1px;height:20px;background:#b4b4b4"></div>
<div class="t" style="left:30px;top:324px;letter-spacing:0.2px">paletteForegroundColor</div>
<div style="left:14px;top:326px;width:9px;height:9px;background:#fff;border:1px solid #000"></div>
<div style="left:16px;top:330px;width:5px;height:1px;background:#000"></div>
<div style="left:18px;top:328px;width:1px;height:5px;background:#000"></div>
<div style="left:190px;top:323px;width:149px;height:16px;background:#000;border:1px solid #000"></div>
<div style="left:9px;top:341px;width:332px;height:20px;background:#fff"></div>
<div style="left:9px;top:360px;width:332px;height:1px;background:#b4b4b4"></div>
<div style="left:187px;top:341px;width:1px;height:20px;background:#b4b4b4"></div>
<div class="t" style="left:30px;top:344px;letter-spacing:0.2px">paletteBackgroundColor</div>
<div style="left:14px;top:346px;width:9px;height:9px;background:#fff;border:1px solid #000"></div>
<div style="left:16px;top:350px;width:5px;height:1px;background:#000"></div>
<div style="left:18px;top:348px;width:1px;height:5px;background:#000"></div>
<div style="left:190px;top:343px;width:149px;height:16px;background:#4f4f4f;border:1px solid #000"></div>
<div style="left:9px;top:361px;width:332px;height:20px;background:#edf3fe"></div>
<div style="left:9px;top:380px;width:332px;height:1px;background:#b4b4b4"></div>
<div style="left:187px;top:361px;width:1px;height:20px;background:#b4b4b4"></div>
<div class="t" style="left:30px;top:364px;letter-spacing:0.2px">paletteBackgroundPixmap</div>
<div class="t" style="left:190px;top:364px;letter-spacing:0.2px"></div>
<div style="left:9px;top:381px;width:332px;height:20px;background:#fff"></div>
<div style="left:9px;top:400px;width:332px;height:1px;background:#b4b4b4"></div>
<div style="left:187px;top:381px;width:1px;height:20px;background:#b4b4b4"></div>
<div class="t" style="left:30px;top:384px;letter-spacing:0.2px">palette</div>
<div style="left:190px;top:383px;width:149px;height:16px;background:#dcdcdc;border:1px solid #000"></div>
<div style="left:9px;top:401px;width:332px;height:20px;background:#edf3fe"></div>
<div style="left:9px;top:420px;width:332px;height:1px;background:#b4b4b4"></div>
<div style="left:187px;top:401px;width:1px;height:20px;background:#b4b4b4"></div>
<div class="t" style="left:30px;top:404px;letter-spacing:0.2px">backgroundOrigin</div>
<div class="t" style="left:190px;top:404px;letter-spacing:0.2px">WidgetOrigin</div>
<div style="left:9px;top:421px;width:332px;height:20px;background:#fff"></div>
<div style="left:9px;top:440px;width:332px;height:1px;background:#b4b4b4"></div>
<div style="left:187px;top:421px;width:1px;height:20px;background:#b4b4b4"></div>
<div class="t" style="left:30px;top:424px;letter-spacing:0.2px">font</div>
<div style="left:14px;top:426px;width:9px;height:9px;background:#fff;border:1px solid #000"></div>
<div style="left:16px;top:430px;width:5px;height:1px;background:#000"></div>
<div style="left:18px;top:428px;width:1px;height:5px;background:#000"></div>
<div class="t" style="left:190px;top:424px;letter-spacing:0.2px">helvetica-8</div>
<div style="left:9px;top:441px;width:332px;height:20px;background:#edf3fe"></div>
<div style="left:9px;top:460px;width:332px;height:1px;background:#b4b4b4"></div>
<div style="left:187px;top:441px;width:1px;height:20px;background:#b4b4b4"></div>
<div class="t" style="left:30px;top:444px;letter-spacing:0.2px">cursor</div>
<div class="t" style="left:190px;top:444px;letter-spacing:0.2px">Arrow</div>
<div style="left:341px;top:180px;width:16px;height:281px;background:#ececec;background-image:repeating-conic-gradient(#fff 0 25%,#dcdcdc 0 50%);background-size:2px 2px"></div>
<div style="left:341px;top:180px;width:16px;height:15px;background:#dcdcdc;border:1px solid;border-color:#fff #000 #000 #fff"></div>
<div style="left:342px;top:181px;width:14px;height:13px;border:1px solid;border-color:#dcdcdc #848484 #848484 #dcdcdc"></div>
<svg style="left:345px;top:185px" width="8" height="4" viewBox="0 0 8 4"><path d="M0 4L4 0L8 4z" fill="#000"/></svg>
<div style="left:341px;top:446px;width:16px;height:15px;background:#dcdcdc;border:1px solid;border-color:#fff #000 #000 #fff"></div>
<div style="left:342px;top:447px;width:14px;height:13px;border:1px solid;border-color:#dcdcdc #848484 #848484 #dcdcdc"></div>
<svg style="left:345px;top:452px" width="8" height="4" viewBox="0 0 8 4"><path d="M0 0L4 4L8 0z" fill="#000"/></svg>
<div style="left:341px;top:195px;width:16px;height:178px;background:#dcdcdc;border:1px solid;border-color:#fff #000 #000 #fff"></div>
<div style="left:342px;top:196px;width:14px;height:176px;border:1px solid;border-color:#dcdcdc #848484 #848484 #dcdcdc"></div>
<div style="left:7px;top:479px;width:342px;height:2px;background:#fff"></div>
<div style="left:7px;top:481px;width:342px;height:1px;background:#555"></div>
<div style="left:348px;top:479px;width:1px;height:3px;background:#555"></div>
<div style="left:7px;top:482px;width:342px;height:2px;background:#fff"></div>
<div style="left:7px;top:484px;width:342px;height:1px;background:#555"></div>
<div style="left:348px;top:482px;width:1px;height:3px;background:#555"></div>
<div style="left:352px;top:476px;width:12px;height:12px;background:#dcdcdc;border:1px solid;border-color:#fff #000 #000 #fff"></div>
<svg style="left:354px;top:478px" width="8" height="8" viewBox="0 0 8 8"><path d="M0.5 0.5L7.5 7.5M7.5 0.5L0.5 7.5" stroke="#000" stroke-width="1.3" fill="none"/></svg>
<div style="left:7px;top:492px;width:65px;height:25px;background:#dcdcdc"></div>
<div style="left:7px;top:492px;width:63px;height:2px;background:#fff"></div>
<div style="left:70px;top:493px;width:1px;height:24px;background:#848484"></div>
<div style="left:71px;top:493px;width:1px;height:24px;background:#000"></div>
<div class="t" style="left:15px;top:497px;letter-spacing:0.2px">Widgets</div>
<div style="left:73px;top:494px;width:58px;height:23px;background:#dcdcdc"></div>
<div style="left:73px;top:494px;width:56px;height:2px;background:#fff"></div>
<div style="left:73px;top:495px;width:1px;height:22px;background:#fff"></div>
<div style="left:129px;top:495px;width:1px;height:22px;background:#848484"></div>
<div style="left:130px;top:495px;width:1px;height:22px;background:#000"></div>
<div class="t" style="left:80px;top:498px;letter-spacing:0.2px">Source</div>
<div style="left:131px;top:515px;width:228px;height:2px;background:#fff"></div>
<div style="left:359px;top:516px;width:2px;height:195px;background:#000"></div>
<div style="left:7px;top:517px;width:352px;height:2px;background:#000"></div>
<div style="left:7px;top:517px;width:2px;height:190px;background:#000"></div>
<div style="left:357px;top:519px;width:2px;height:190px;background:#fff"></div>
<div style="left:7px;top:707px;width:352px;height:2px;background:#fff"></div>
<div style="left:9px;top:519px;width:332px;height:188px;background:#fff"></div>
<div style="left:9px;top:519px;width:332px;height:19px;background:#dcdcdc"></div>
<div style="left:9px;top:519px;width:331px;height:1px;background:#fff"></div>
<div style="left:9px;top:519px;width:1px;height:19px;background:#fff"></div>
<div style="left:174px;top:520px;width:1px;height:18px;background:#fff"></div>
<div style="left:172px;top:520px;width:2px;height:18px;background:#555"></div>
<div style="left:339px;top:520px;width:2px;height:18px;background:#555"></div>
<div style="left:9px;top:538px;width:332px;height:2px;background:#000"></div>
<div class="t" style="left:13px;top:523px;">Name</div>
<div class="t" style="left:178px;top:523px;">Class</div>
<div style="left:9px;top:540px;width:332px;height:22px;background:#edf3fe"></div>
<div style="left:9px;top:561px;width:332px;height:1px;background:#b4b4b4"></div>
<div style="left:172px;top:540px;width:1px;height:22px;background:#b4b4b4"></div>
<div class="t" style="left:31px;top:544px;letter-spacing:0.2px">MyWidget1</div>
<div class="t" style="left:174px;top:544px;letter-spacing:0.25px">QWidget</div>
<div style="left:9px;top:562px;width:332px;height:24px;background:#fff"></div>
<div style="left:30px;top:585px;width:311px;height:1px;background:#b4b4b4"></div>
<div style="left:172px;top:562px;width:1px;height:24px;background:#b4b4b4"></div>
<div style="left:9px;top:562px;width:21px;height:24px;background:#fff"></div>
<div style="left:30px;top:562px;width:142px;height:23px;background:#4f6b9c"></div>
<div class="t" style="left:53px;top:567px;color:#fff;letter-spacing:0.2px">TQRootCanvas3</div>
<div class="t" style="left:174px;top:567px;letter-spacing:0.25px">TQRootCanvas</div>
<div style="left:9px;top:586px;width:332px;height:24px;background:#edf3fe"></div>
<div style="left:30px;top:609px;width:311px;height:1px;background:#b4b4b4"></div>
<div style="left:172px;top:586px;width:1px;height:24px;background:#b4b4b4"></div>
<div style="left:9px;top:586px;width:21px;height:24px;background:#fff"></div>
<div class="t" style="left:53px;top:591px;letter-spacing:0.2px">ListView4</div>
<div class="t" style="left:174px;top:591px;letter-spacing:0.25px">QListView</div>
<div style="left:9px;top:610px;width:332px;height:24px;background:#fff"></div>
<div style="left:30px;top:633px;width:311px;height:1px;background:#b4b4b4"></div>
<div style="left:172px;top:610px;width:1px;height:24px;background:#b4b4b4"></div>
<div style="left:9px;top:610px;width:21px;height:24px;background:#fff"></div>
<div class="t" style="left:53px;top:615px;letter-spacing:0.2px">Slider1</div>
<div class="t" style="left:174px;top:615px;letter-spacing:0.25px">QSlider</div>
<div style="left:9px;top:634px;width:332px;height:24px;background:#edf3fe"></div>
<div style="left:30px;top:657px;width:311px;height:1px;background:#b4b4b4"></div>
<div style="left:172px;top:634px;width:1px;height:24px;background:#b4b4b4"></div>
<div style="left:9px;top:634px;width:21px;height:24px;background:#fff"></div>
<div class="t" style="left:53px;top:639px;letter-spacing:0.2px">Dial1</div>
<div class="t" style="left:174px;top:639px;letter-spacing:0.25px">QDial</div>
<div style="left:9px;top:658px;width:332px;height:24px;background:#fff"></div>
<div style="left:30px;top:681px;width:311px;height:1px;background:#b4b4b4"></div>
<div style="left:172px;top:658px;width:1px;height:24px;background:#b4b4b4"></div>
<div style="left:9px;top:658px;width:21px;height:24px;background:#fff"></div>
<div class="t" style="left:53px;top:663px;letter-spacing:0.2px">TimeEdit1</div>
<div class="t" style="left:174px;top:663px;letter-spacing:0.25px">QTimeEdit</div>
<div style="left:9px;top:682px;width:332px;height:24px;background:#edf3fe"></div>
<div style="left:30px;top:705px;width:311px;height:1px;background:#b4b4b4"></div>
<div style="left:172px;top:682px;width:1px;height:24px;background:#b4b4b4"></div>
<div style="left:9px;top:682px;width:21px;height:24px;background:#fff"></div>
<div class="t" style="left:53px;top:687px;letter-spacing:0.2px">SpinBox1</div>
<div class="t" style="left:174px;top:687px;letter-spacing:0.25px">QSpinBox</div>
<div style="left:29px;top:562px;width:1px;height:144px;background:#b4b4b4"></div>
<div style="left:15px;top:562px;width:1px;height:145px;background-image:linear-gradient(#555 50%,transparent 50%);background-size:1px 2px"></div>
<div style="left:16px;top:574px;width:13px;height:1px;background-image:linear-gradient(90deg,#555 50%,transparent 50%);background-size:2px 1px"></div>
<div style="left:16px;top:598px;width:13px;height:1px;background-image:linear-gradient(90deg,#555 50%,transparent 50%);background-size:2px 1px"></div>
<div style="left:16px;top:622px;width:13px;height:1px;background-image:linear-gradient(90deg,#555 50%,transparent 50%);background-size:2px 1px"></div>
<div style="left:16px;top:646px;width:13px;height:1px;background-image:linear-gradient(90deg,#555 50%,transparent 50%);background-size:2px 1px"></div>
<div style="left:16px;top:670px;width:13px;height:1px;background-image:linear-gradient(90deg,#555 50%,transparent 50%);background-size:2px 1px"></div>
<div style="left:16px;top:694px;width:13px;height:1px;background-image:linear-gradient(90deg,#555 50%,transparent 50%);background-size:2px 1px"></div>
<div style="left:12px;top:544px;width:16px;height:14px;background:#fff;border:1px solid #10106a;border-top:3px solid #10106a"></div>
<div style="left:13px;top:545px;width:14px;height:1px;background:#fff"></div>
<div style="left:341px;top:519px;width:16px;height:188px;background:#ececec;background-image:repeating-conic-gradient(#fff 0 25%,#dcdcdc 0 50%);background-size:2px 2px"></div>
<div style="left:341px;top:519px;width:16px;height:15px;background:#dcdcdc;border:1px solid;border-color:#fff #000 #000 #fff"></div>
<div style="left:342px;top:520px;width:14px;height:13px;border:1px solid;border-color:#dcdcdc #848484 #848484 #dcdcdc"></div>
<svg style="left:345px;top:524px" width="8" height="4" viewBox="0 0 8 4"><path d="M0 4L4 0L8 4z" fill="#000"/></svg>
<div style="left:341px;top:692px;width:16px;height:15px;background:#dcdcdc;border:1px solid;border-color:#fff #000 #000 #fff"></div>
<div style="left:342px;top:693px;width:14px;height:13px;border:1px solid;border-color:#dcdcdc #848484 #848484 #dcdcdc"></div>
<svg style="left:345px;top:698px" width="8" height="4" viewBox="0 0 8 4"><path d="M0 0L4 4L8 0z" fill="#000"/></svg>
<div style="left:341px;top:534px;width:16px;height:138px;background:#dcdcdc;border:1px solid;border-color:#fff #000 #000 #fff"></div>
<div style="left:342px;top:535px;width:14px;height:136px;border:1px solid;border-color:#dcdcdc #848484 #848484 #dcdcdc"></div>
<svg style="left:30px;top:563px" width="21" height="22" viewBox="0 0 21 22"><defs><radialGradient id="qtb" cx="0.4" cy="0.35" r="0.8"><stop offset="0" stop-color="#6a7a3a"/><stop offset="1" stop-color="#2a3418"/></radialGradient></defs><rect x="0.500" y="0.500" width="20" height="21" rx="4" fill="url(#qtb)"/><circle cx="10" cy="10.500" r="6" fill="none" stroke="#a4d024" stroke-width="3.400"/><path d="M9 10.500h4l5 8" stroke="#a4d024" stroke-width="3" fill="none"/></svg>
<svg style="left:30px;top:587px" width="22" height="22" viewBox="0 0 22 22"><rect x="0.8" y="0.8" width="20.4" height="20.4" rx="4.5" fill="#fff" stroke="#3a1c10" stroke-width="1.5"/><path d="M5 3.500l3 1.500v2" stroke="#2a7a2a" stroke-width="1.800" fill="none"/><path d="M8 7v10M8 11h5" stroke="#222" stroke-width="1" stroke-dasharray="2 1" fill="none"/><rect x="14" y="8" width="3" height="3" fill="#d04030"/><path d="M15.500 11v4" stroke="#222" stroke-width="1" stroke-dasharray="1 1"/><rect x="14" y="15" width="3" height="4" fill="#2030a0"/><path d="M6.500 16l3 3m0-3l-3 3" stroke="#222" stroke-width="1"/></svg>
<svg style="left:30.5px;top:614px" width="21" height="15" viewBox="0 0 21 15"><rect x="0" y="6" width="21" height="3.500" rx="1.700" fill="#0c2c4c"/><rect x="11" y="6.500" width="9" height="1.500" fill="#5a8ab8"/><rect x="5.500" y="0.500" width="5" height="14" rx="1" fill="#f4f4f4" stroke="#9a9a9a" stroke-width="0.800"/><rect x="9" y="1" width="1.500" height="13" fill="#aaa"/></svg>
<svg style="left:32.5px;top:637px" width="17" height="17" viewBox="0 0 17 17"><defs><radialGradient id="dlg2" cx="0.5" cy="0.5" r="0.5"><stop offset="0" stop-color="#0e3c6c"/><stop offset="0.55" stop-color="#1e5c98"/><stop offset="0.75" stop-color="#8fb4d8"/><stop offset="1" stop-color="#0e3c6c"/></radialGradient></defs><circle cx="8.5" cy="8.5" r="7.8" fill="url(#dlg2)" stroke="#0a2a50" stroke-width="1.200"/><path d="M8.5 8.5L4.5 4.5" stroke="#fff" stroke-width="1.600"/></svg>
<svg style="left:30.5px;top:659px" width="20" height="20" viewBox="0 0 20 20"><defs><radialGradient id="ckg3" cx="0.45" cy="0.4" r="0.7"><stop offset="0" stop-color="#fff"/><stop offset="0.750" stop-color="#fff"/><stop offset="1" stop-color="#c8d8e8"/></radialGradient><linearGradient id="ckr" x1="0" y1="0" x2="0.400" y2="1"><stop offset="0" stop-color="#2a74c8"/><stop offset="0.600" stop-color="#1a5aa8"/><stop offset="1" stop-color="#0a2c60"/></linearGradient></defs><circle cx="10" cy="10" r="10" fill="url(#ckr)"/><circle cx="10" cy="10" r="7" fill="url(#ckg3)"/><path d="M10.3 4.5v6.3h4.8" stroke="#0c3f80" stroke-width="1.300" fill="none"/></svg>
<svg style="left:30px;top:683px" width="22" height="22" viewBox="0 0 22 22"><rect x="0.8" y="0.8" width="20.4" height="20.4" rx="4.5" fill="#fff" stroke="#0a1420" stroke-width="1.8"/><rect x="2.200" y="2.200" width="17.6" height="17.6" rx="3" fill="none" stroke="#a8c0d8" stroke-width="0.900"/><text x="2.600" y="14.800" font-family="Liberation Sans,sans-serif" font-size="9.500" font-weight="bold" fill="#1c5a9c" textLength="10.500" lengthAdjust="spacingAndGlyphs">123</text><path d="M13.500 10.200l3.300-5.700 3.300 5.700zM13.500 12.300l3.300 5.700 3.300-5.700z" fill="#1c5a9c"/></svg>
<div style="left:369px;top:136px;width:569px;height:578px;background:#7a7a7a"></div>
<svg style="left:369px;top:136px" width="569" height="578"><defs><filter id="bl" x="0" y="0" width="1" height="1"><feGaussianBlur stdDeviation="1.100"/></filter><pattern id="tx" width="36" height="36" patternUnits="userSpaceOnUse" x="6.750" y="6.750"><rect width="36" height="36" fill="#7a7a7a"/><g id="ring"><circle cx="9" cy="9" r="8.600" fill="none" stroke="#828282" stroke-width="3"/><path d="M2.500 14.500A8.600 8.600 0 0 1 14.500 2.500" fill="none" stroke="#8e8e8e" stroke-width="3"/><path d="M16.800 5A8.600 8.600 0 0 1 5 16.800" fill="none" stroke="#757575" stroke-width="2.600"/><circle cx="9" cy="9" r="6.200" fill="#7e7e7e"/><path d="M4.500 13.500L13.500 4.500" stroke="#6a6a6a" stroke-width="3.600" stroke-linecap="round"/><path d="M3 10.500L10.500 3" stroke="#8c8c8c" stroke-width="1.800" stroke-linecap="round"/><path d="M7.500 15.200L15.200 7.500" stroke="#8a8a8a" stroke-width="1.800" stroke-linecap="round"/></g><use href="#ring" x="18" y="18"/><g id="st"><path d="M27 3l2.500 3.500 3.500 2.500-3.500 2.500-2.500 3.500-2.500-3.500-3.500-2.500 3.500-2.500z" fill="#888"/><path d="M25 11l4-4" stroke="#6a6a6a" stroke-width="2.400" stroke-linecap="round"/><path d="M18 4v10M36 4v10" stroke="#707070" stroke-width="2.400" stroke-linecap="round"/></g><use href="#st" x="-18" y="18"/></pattern></defs><rect width="569" height="579" fill="url(#tx)" filter="url(#bl)"/></svg>
<div style="left:366px;top:135px;width:574px;height:1px;background:#fff"></div>
<div style="left:369px;top:714px;width:571px;height:1px;background:#fff"></div>
<div style="left:938px;top:135px;width:2px;height:580px;background:#fff"></div>
<div style="left:374px;top:136px;width:534px;height:312px;background:#dcdcdc;border:1px solid;border-color:#fff #000 #000 #fff"></div>
<div style="left:375px;top:446px;width:532px;height:1px;background:#000"></div>
<div style="left:906px;top:137px;width:1px;height:310px;background:#000"></div>
<div style="left:376px;top:137px;width:530px;height:18px;background:linear-gradient(#5d79aa,#506c9d)"></div>
<div style="left:379px;top:139px;width:14px;height:14px;background:#fff;border:1px solid #10106a;border-top:3px solid #10106a"></div>
<div style="left:381px;top:140px;width:8px;height:1px;background:#fff"></div>
<div class="t" style="left:396px;top:139px;color:#fff;letter-spacing:0.15px">MyWidget1</div>
<div style="left:860px;top:139px;width:14px;height:14px;background:#dcdcdc;border:1px solid;border-color:#fff #000 #000 #fff"></div>
<div style="left:861px;top:140px;width:12px;height:12px;border:1px solid;border-color:#dcdcdc #848484 #848484 #dcdcdc"></div>
<div style="left:864px;top:148px;width:6px;height:2px;background:#000"></div>
<div style="left:875px;top:139px;width:14px;height:14px;background:#dcdcdc;border:1px solid;border-color:#fff #000 #000 #fff"></div>
<div style="left:876px;top:140px;width:12px;height:12px;border:1px solid;border-color:#dcdcdc #848484 #848484 #dcdcdc"></div>
<div style="left:878px;top:142px;width:9px;height:9px;border:1px solid #000;border-top:2px solid #000"></div>
<div style="left:890px;top:139px;width:14px;height:14px;background:#dcdcdc;border:1px solid;border-color:#fff #000 #000 #fff"></div>
<div style="left:891px;top:140px;width:12px;height:12px;border:1px solid;border-color:#dcdcdc #848484 #848484 #dcdcdc"></div>
<svg style="left:893px;top:142px" width="8" height="8" viewBox="0 0 8 8"><path d="M0.5 0.5L7.5 7.500M7.500 0.500L0.500 7.500" stroke="#000" stroke-width="1.400" fill="none"/></svg>
<div style="left:376px;top:155px;width:530px;height:291px;background-color:#dcdcdc;background-image:radial-gradient(circle at 0.5px 0.5px,#000 0.55px,transparent 0.8px);background-size:10px 10px;background-position:0px 1px"></div>
<div style="left:387px;top:167px;width:290px;height:159px;background:#fff"></div>
<div style="left:387px;top:167px;width:289px;height:2px;background:#000"></div>
<div style="left:387px;top:167px;width:2px;height:158px;background:#000"></div>
<div style="left:387px;top:167px;width:288px;height:1px;background:#3a3a3a"></div>
<div style="left:387px;top:167px;width:1px;height:157px;background:#3a3a3a"></div>
<div style="left:675px;top:168px;width:2px;height:158px;background:#fff"></div>
<div style="left:388px;top:325px;width:289px;height:1px;background:#fff"></div>
<div style="left:389px;top:169px;width:286px;height:19px;background:#dcdcdc"></div>
<div style="left:389px;top:169px;width:286px;height:1px;background:#fff"></div>
<div style="left:389px;top:169px;width:1px;height:19px;background:#fff"></div>
<div style="left:441px;top:170px;width:1px;height:18px;background:#777"></div>
<div style="left:442px;top:170px;width:1px;height:18px;background:#000"></div>
<div style="left:443px;top:170px;width:1px;height:18px;background:#fff"></div>
<div style="left:485px;top:170px;width:1px;height:18px;background:#777"></div>
<div style="left:486px;top:170px;width:1px;height:18px;background:#000"></div>
<div style="left:487px;top:170px;width:1px;height:18px;background:#fff"></div>
<div style="left:389px;top:188px;width:286px;height:2px;background:#000"></div>
<div class="t" style="left:393.5px;top:173px;letter-spacing:0.2px">Name</div>
<div class="t" style="left:447.5px;top:173px;letter-spacing:0.2px">Type</div>
<div class="t" style="left:390px;top:192px;word-spacing:-1px">New Item</div>
<div style="left:387px;top:331px;width:291px;height:18px;background:#dcdcdc"></div>
<div style="left:398px;top:338px;width:279px;height:2px;background:#000"></div>
<div style="left:398px;top:340px;width:279px;height:1px;background:#fff"></div>
<div style="left:387px;top:332px;width:11px;height:16px;background:#dcdcdc;border:1px solid;border-color:#fff #000 #000 #fff"></div>
<div style="left:388px;top:333px;width:9px;height:14px;border:1px solid;border-color:#dcdcdc #000 #000 #dcdcdc"></div>
<div style="left:387px;top:350px;width:124px;height:63px;background:#dcdcdc"></div>
<svg style="left:424px;top:357px" width="48" height="48" viewBox="0 0 48 48"><defs><pattern id="dth" width="2" height="2" patternUnits="userSpaceOnUse"><rect width="2" height="2" fill="#f4f4f4"/><rect width="1" height="1" fill="#dcdcdc"/><rect x="1" y="1" width="1" height="1" fill="#dcdcdc"/></pattern></defs><circle cx="24.500" cy="24" r="22" fill="url(#dth)"/><path d="M9 39.500A22 22 0 0 1 36 5.200" fill="none" stroke="#333" stroke-width="1"/><path d="M9 39.500A22 22 0 0 0 40 39.500A22 22 0 0 0 36 5.200" fill="none" stroke="#fff" stroke-width="1"/><path d="M27.500 22L15.500 40.500" stroke="#222" stroke-width="1"/></svg>
<div style="left:515px;top:371px;width:160px;height:19px;background:#fff"></div>
<div style="left:515px;top:371px;width:159px;height:2px;background:#000"></div>
<div style="left:515px;top:371px;width:2px;height:19px;background:#000"></div>
<div style="left:515px;top:389px;width:160px;height:1px;background:#fff"></div>
<div style="left:674px;top:371px;width:1px;height:19px;background:#fff"></div>
<div class="t" style="left:521.5px;top:374px;letter-spacing:0.3px">00:00:00</div>
<div style="left:661px;top:373px;width:12px;height:8px;background:#dcdcdc;border-style:solid;border-width:1px 2px 2px 1px;border-color:#f4f4f4 #000 #000 #f4f4f4"></div>
<svg style="left:664px;top:375px" width="6" height="3" viewBox="0 0 6 3"><path d="M0 3L3 0L6 3z" fill="#000"/></svg>
<div style="left:661px;top:381px;width:12px;height:8px;background:#dcdcdc;border-style:solid;border-width:1px 2px 2px 1px;border-color:#f4f4f4 #000 #000 #f4f4f4"></div>
<svg style="left:664px;top:383px" width="6" height="3" viewBox="0 0 6 3"><path d="M0 0L3 3L6 0z" fill="#000"/></svg>
<svg style="left:388px;top:421px" width="249" height="6" viewBox="0 0 249 6"><defs><pattern id="spr" width="3" height="6" patternUnits="userSpaceOnUse" x="1" y="0"><rect width="3" height="6" fill="#f0f0fc"/><rect x="1" y="0" width="1" height="2" fill="#000080"/><rect x="0" y="2" width="1" height="3" fill="#000080"/><rect x="2" y="5" width="1" height="1" fill="#000080"/></pattern></defs><rect width="249" height="6" fill="url(#spr)"/></svg>
<div style="left:387px;top:414px;width:1px;height:20px;background:#000080"></div>
<div style="left:637px;top:414px;width:1px;height:20px;background:#000080"></div>
<div style="left:644px;top:414px;width:30px;height:20px;background:#fff"></div>
<div style="left:644px;top:414px;width:30px;height:2px;background:#000"></div>
<div style="left:644px;top:414px;width:2px;height:20px;background:#000"></div>
<div style="left:644px;top:433px;width:30px;height:1px;background:#fff"></div>
<div style="left:673px;top:414px;width:1px;height:20px;background:#fff"></div>
<div class="t" style="left:649px;top:417px;">0</div>
<div style="left:661px;top:416px;width:12px;height:8px;background:#dcdcdc;border-style:solid;border-width:1px 2px 2px 1px;border-color:#f4f4f4 #000 #000 #f4f4f4"></div>
<svg style="left:664px;top:418px" width="6" height="3" viewBox="0 0 6 3"><path d="M0 3L3 0L6 3z" fill="#000"/></svg>
<div style="left:661px;top:424px;width:12px;height:8px;background:#dcdcdc;border-style:solid;border-width:1px 2px 2px 1px;border-color:#f4f4f4 #000 #000 #f4f4f4"></div>
<svg style="left:664px;top:426px" width="6" height="3" viewBox="0 0 6 3"><path d="M0 0L3 3L6 0z" fill="#000"/></svg>
<div style="left:684px;top:167px;width:210px;height:267px;background:#4f4f4f"></div>
<div style="left:713px;top:250px;width:152px;height:100px;background:#b7cd0c;overflow:hidden"><div style="left:0;top:0;width:152px;height:100px;background:radial-gradient(ellipse 26px 60px at 99px 50px,rgba(70,85,0,0.45),rgba(70,85,0,0.18) 60%,rgba(70,85,0,0) 100%)"></div><svg style="left:0;top:0" width="152" height="100" viewBox="0 0 152 100"><defs><radialGradient id="qg" cx="0.5" cy="0.35" r="0.7"><stop offset="0" stop-color="#c9d95a"/><stop offset="1" stop-color="#9db31a"/></radialGradient><linearGradient id="qr" x1="0" y1="0" x2="1" y2="1"><stop offset="0" stop-color="#0c0c0c"/><stop offset="0.550" stop-color="#1c1c1c"/><stop offset="0.800" stop-color="#4a4a4a"/><stop offset="1" stop-color="#222"/></linearGradient><linearGradient id="qt" x1="0" y1="0" x2="1" y2="1"><stop offset="0" stop-color="#1a1a1a"/><stop offset="0.500" stop-color="#4c4c4c"/><stop offset="1" stop-color="#1a1a1a"/></linearGradient></defs><g font-family="Liberation Serif,serif" font-size="78.500" font-weight="bold" stroke-linejoin="round"><g fill="#1f80b4" stroke="#1f80b4" stroke-width="2.600"><text x="6.800" y="75.300" textLength="64" lengthAdjust="spacingAndGlyphs">RO</text><text x="124" y="75.300" textLength="25" lengthAdjust="spacingAndGlyphs">T</text></g><g fill="#63d9fb" stroke="#63d9fb" stroke-width="2.600"><text x="4.600" y="74.300" textLength="64" lengthAdjust="spacingAndGlyphs">RO</text><text x="121.800" y="74.300" textLength="25" lengthAdjust="spacingAndGlyphs">T</text></g></g><ellipse cx="96.500" cy="46.500" rx="22" ry="34.300" fill="url(#qr)"/><ellipse cx="100.300" cy="47.700" rx="13.200" ry="24.500" fill="url(#qg)"/><path d="M83.100 51.200L102.100 31.700L107.900 37.300L88.900 56.800z" fill="url(#qt)"/><path d="M98.900 42.100L119.400 75.900L112.600 80.100L92.100 46.300z" fill="url(#qt)"/></svg></div>
<div style="left:681px;top:164px;width:6px;height:6px;background:#000060;border:1px solid #0a0a8c"></div>
<div style="left:786px;top:164px;width:6px;height:6px;background:#000060;border:1px solid #0a0a8c"></div>
<div style="left:891px;top:164px;width:6px;height:6px;background:#000060;border:1px solid #0a0a8c"></div>
<div style="left:681px;top:297px;width:6px;height:6px;background:#000060;border:1px solid #0a0a8c"></div>
<div style="left:891px;top:297px;width:6px;height:6px;background:#000060;border:1px solid #0a0a8c"></div>
<div style="left:681px;top:431px;width:6px;height:6px;background:#000060;border:1px solid #0a0a8c"></div>
<div style="left:786px;top:431px;width:6px;height:6px;background:#000060;border:1px solid #0a0a8c"></div>
<div style="left:891px;top:431px;width:6px;height:6px;background:#000060;border:1px solid #0a0a8c"></div>
</div>
</body></html>
